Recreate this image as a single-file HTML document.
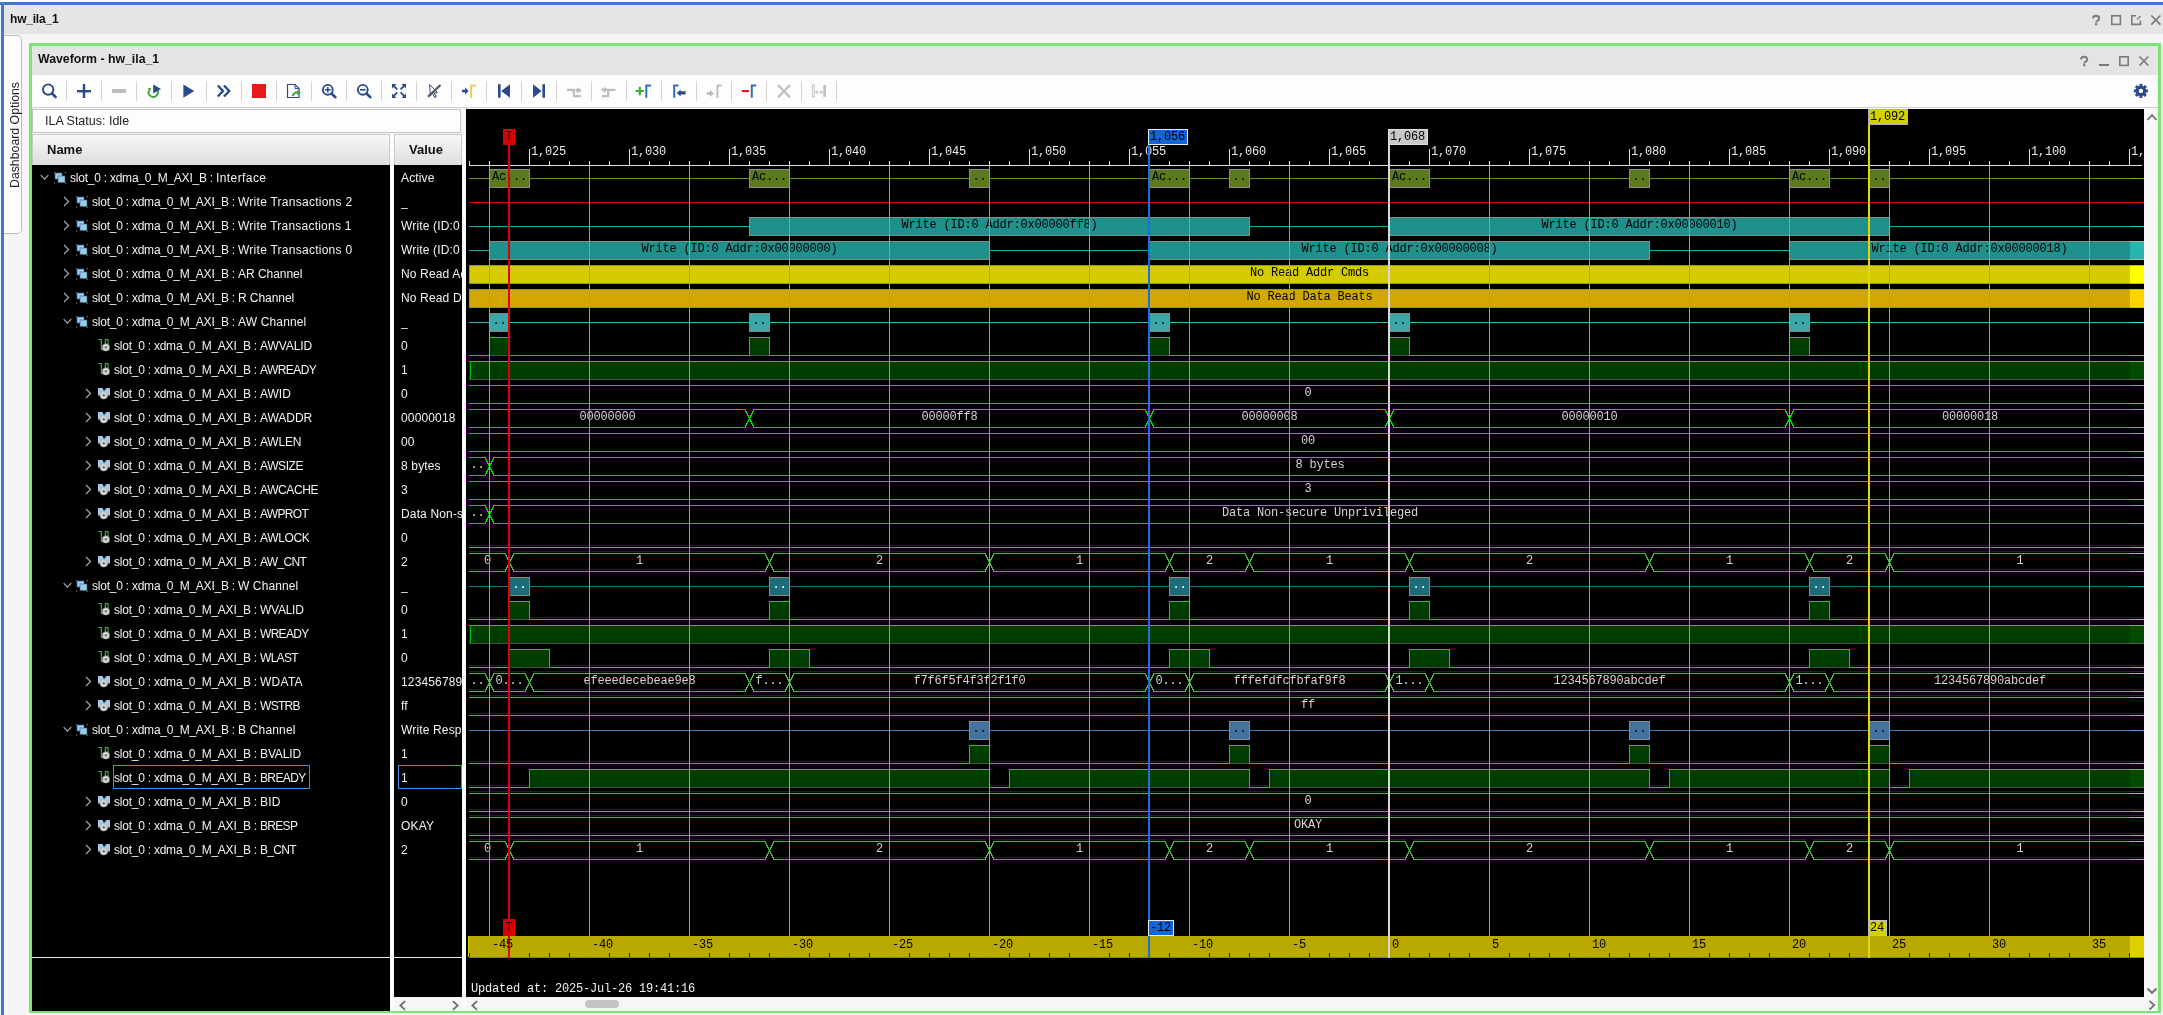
<!DOCTYPE html><html><head><meta charset="utf-8"><title>hw_ila_1</title><style>
*{box-sizing:border-box}
html,body{margin:0;padding:0}
body{width:2163px;height:1015px;overflow:hidden;position:relative;background:#f5f5f5;font-family:"Liberation Sans",sans-serif}
.a{position:absolute}
.t{position:absolute;white-space:nowrap;line-height:1}
.nm{position:absolute;white-space:nowrap;color:#f2f2f2;font-size:12px;line-height:24px;height:24px}
.vl{position:absolute;white-space:nowrap;color:#f2f2f2;font-size:12px;letter-spacing:0.15px;line-height:24px;height:24px;left:401px;overflow:hidden;width:61px}
</style></head><body>
<div class="a" style="left:0;top:0;width:2163px;height:2px;background:#ffffff"></div>
<div class="a" style="left:0;top:2px;width:2163px;height:3px;background:#4577c8"></div>
<div class="a" style="left:1px;top:2px;width:3px;height:1013px;background:#4577c8"></div>
<div class="a" style="left:4px;top:5px;width:2159px;height:29px;background:#e5e5e5"></div>
<div class="t" style="left:10px;top:13px;font-size:12px;font-weight:bold;color:#111;letter-spacing:-0.2px">hw_ila_1</div>
<div class="a" style="left:4px;top:35px;width:18px;height:199px;background:#fdfdfd;border:1px solid #bdbdbd;border-left:none;border-radius:0 5px 5px 0"></div>
<div class="t" style="left:8.5px;top:188px;transform-origin:0 0;transform:rotate(-90deg);font-size:12.3px;color:#222">Dashboard Options</div>
<div class="a" style="left:29px;top:43px;width:2132px;height:970px;border:3px solid #78e478;border-bottom-width:2px"></div>
<div class="a" style="left:32px;top:46px;width:2126px;height:29px;background:#e4e4e4"></div>
<div class="t" style="left:38px;top:53px;font-size:12.3px;font-weight:bold;color:#111">Waveform - hw_ila_1</div>
<div class="a" style="left:32px;top:75px;width:2126px;height:33px;background:#fdfdfd"></div>
<div class="a" style="left:32px;top:107px;width:2126px;height:1px;background:#d0d0d0"></div>
<svg class="a" style="left:32px;top:75px" width="2127" height="33" viewBox="32 75 2127 33">
<rect x="66" y="81" width="1" height="20" fill="#d4d4d4"/>
<rect x="101" y="81" width="1" height="20" fill="#d4d4d4"/>
<rect x="136" y="81" width="1" height="20" fill="#d4d4d4"/>
<rect x="171" y="81" width="1" height="20" fill="#d4d4d4"/>
<rect x="206" y="81" width="1" height="20" fill="#d4d4d4"/>
<rect x="241" y="81" width="1" height="20" fill="#d4d4d4"/>
<rect x="276" y="81" width="1" height="20" fill="#d4d4d4"/>
<rect x="311" y="81" width="1" height="20" fill="#d4d4d4"/>
<rect x="346" y="81" width="1" height="20" fill="#d4d4d4"/>
<rect x="381" y="81" width="1" height="20" fill="#d4d4d4"/>
<rect x="416" y="81" width="1" height="20" fill="#d4d4d4"/>
<rect x="451" y="81" width="1" height="20" fill="#d4d4d4"/>
<rect x="486" y="81" width="1" height="20" fill="#d4d4d4"/>
<rect x="521" y="81" width="1" height="20" fill="#d4d4d4"/>
<rect x="556" y="81" width="1" height="20" fill="#d4d4d4"/>
<rect x="591" y="81" width="1" height="20" fill="#d4d4d4"/>
<rect x="626" y="81" width="1" height="20" fill="#d4d4d4"/>
<rect x="661" y="81" width="1" height="20" fill="#d4d4d4"/>
<rect x="696" y="81" width="1" height="20" fill="#d4d4d4"/>
<rect x="731" y="81" width="1" height="20" fill="#d4d4d4"/>
<rect x="766" y="81" width="1" height="20" fill="#d4d4d4"/>
<rect x="801" y="81" width="1" height="20" fill="#d4d4d4"/>
<rect x="836" y="81" width="1" height="20" fill="#d4d4d4"/>
<circle cx="48.2" cy="89.6" r="5.2" fill="none" stroke="#2b4a8b" stroke-width="1.9"/>
<path d="M52.2,93.6 L55.6,97" stroke="#2b4a8b" stroke-width="2.6" stroke-linecap="round"/>
<rect x="77" y="90" width="14" height="2.4" fill="#2b4a8b"/><rect x="82.8" y="84" width="2.4" height="14" fill="#2b4a8b"/>
<rect x="112" y="89" width="14" height="4" fill="#bdbdbd"/>
<path d="M149,90.5 A4.6,4.6 0 1 0 156.5,89" fill="none" stroke="#3aa83a" stroke-width="2"/>
<path d="M147.5,88.5 L150.5,91.5 L151,87.8 Z" fill="#3aa83a"/>
<path d="M153.2,84.5 L161,89 L153.2,93.6 Z" fill="#2b4a8b"/>
<path d="M183.4,84.4 L194.2,91 L183.4,97.8 Z" fill="#2b4a8b"/>
<path d="M217.8,85.5 L223,91 L217.8,96.5 M224,85.5 L229.2,91 L224,96.5" fill="none" stroke="#2b4a8b" stroke-width="2.4"/>
<rect x="252" y="84" width="14" height="14" fill="#e81a1a"/>
<path d="M287.5,84.5 H295 L299,88.5 V97.5 H287.5 Z" fill="none" stroke="#2b4a8b" stroke-width="1.2"/>
<path d="M295,84.5 V88.5 H299" fill="none" stroke="#2b4a8b" stroke-width="1"/>
<path d="M292.5,96 Q294,92.5 298,92.3" fill="none" stroke="#3aa83a" stroke-width="2"/><path d="M297,90 L301,92.5 L297,95 Z" fill="#3aa83a"/>
<circle cx="327.8" cy="89.8" r="4.9" fill="none" stroke="#2b4a8b" stroke-width="1.9"/>
<path d="M332,94 L335.4,97.2" stroke="#2b4a8b" stroke-width="2.6" stroke-linecap="round"/>
<path d="M325,89.8 H330.6 M327.8,87 V92.6" stroke="#2b4a8b" stroke-width="1.5"/>
<circle cx="362.8" cy="89.8" r="4.9" fill="none" stroke="#2b4a8b" stroke-width="1.9"/>
<path d="M367,94 L370.4,97.2" stroke="#2b4a8b" stroke-width="2.6" stroke-linecap="round"/>
<path d="M360,89.8 H365.6" stroke="#2b4a8b" stroke-width="1.6"/>
<path d="M393,85.2 L397.2,89.4 M404.8,85.2 L400.6,89.4 M393,96.6 L397.2,92.4 M404.8,96.6 L400.6,92.4" stroke="#2b4a8b" stroke-width="1.8"/>
<path d="M392,84 H396.5 L392,88.5 Z M406,84 H401.5 L406,88.5 Z M392,98 H396.5 L392,93.5 Z M406,98 H401.5 L406,93.5 Z" fill="#2b4a8b"/>
<path d="M429.6,84.6 L437.4,92.6 L434.2,92.8 L436.2,97 L434.8,97.6 L432.8,93.4 L430.4,95.6 Z" fill="none" stroke="#2b4a8b" stroke-width="1"/>
<path d="M428,96.8 L440.5,85" stroke="#555" stroke-width="2.2"/>
<path d="M462,89.8 H465 V87.6 L468.6,91 L465,94.4 V92.2 H462 Z" fill="#2b4a8b"/>
<path d="M471.2,97.7 V85.4 H476" fill="none" stroke="#e8c860" stroke-width="2"/>
<rect x="498" y="84.2" width="2.6" height="13.5" fill="#2b4a8b"/><path d="M510,84.2 L501.2,91 L510,97.7 Z" fill="#2b4a8b"/>
<path d="M533,84.2 L541.6,91 L533,97.7 Z" fill="#2b4a8b"/><rect x="542.4" y="84.2" width="2.6" height="13.5" fill="#2b4a8b"/>
<path d="M567,89.8 H573.8 V96.2 H581" fill="none" stroke="#bdbdbd" stroke-width="2.2"/>
<path d="M575,90.3 L578.5,87 V88.8 H581 V91.8 H578.5 V93.6 Z" fill="#bdbdbd"/>
<path d="M602,96.2 H608.2 V89.8 H615.5" fill="none" stroke="#bdbdbd" stroke-width="2.2"/>
<path d="M607.8,89.6 L604.2,86.4 V88.2 H601.6 V91.2 H604.2 V93 Z" fill="#bdbdbd"/>
<path d="M635.6,91 H644 M639.8,86.8 V95.2" stroke="#3ab03a" stroke-width="2.2"/>
<path d="M646.3,97.7 V85.5 H651" fill="none" stroke="#2d72b8" stroke-width="2"/>
<path d="M674.2,97.7 V85.5 H678.5" fill="none" stroke="#2d72b8" stroke-width="2"/>
<path d="M676.8,92.9 L680.6,89.4 V91.2 H685.6 V94.6 H680.6 V96.4 Z" fill="#2b4a8b"/>
<path d="M706.8,92 H710 V89.8 L714,93.4 L710,97 V94.8 H706.8 Z" fill="#bdbdbd"/>
<path d="M717.4,97.7 V85.5 H721.5" fill="none" stroke="#bdbdbd" stroke-width="2"/>
<rect x="741.8" y="90" width="7.2" height="2.2" fill="#e02020"/>
<path d="M751.8,97.7 V85.5 H756.2" fill="none" stroke="#2d72b8" stroke-width="2"/>
<path d="M778,85 L790,97.4 M790,85 L778,97.4" stroke="#bdbdbd" stroke-width="2.2"/>
<rect x="812.3" y="85" width="2" height="11.8" fill="none" stroke="#bdbdbd" stroke-width="0.9"/>
<rect x="823.3" y="85" width="2.6" height="11.8" fill="#bdbdbd"/>
<path d="M815.5,92.2 H822.5 M817.5,90.4 L815.5,92.2 L817.5,94 M820.5,90.4 L822.5,92.2 L820.5,94" fill="none" stroke="#bdbdbd" stroke-width="1"/>
<rect x="2139.4" y="83.9" width="3" height="3.5" fill="#2b4a8b" transform="rotate(0 2140.9 90.9)"/><rect x="2139.4" y="83.9" width="3" height="3.5" fill="#2b4a8b" transform="rotate(45 2140.9 90.9)"/><rect x="2139.4" y="83.9" width="3" height="3.5" fill="#2b4a8b" transform="rotate(90 2140.9 90.9)"/><rect x="2139.4" y="83.9" width="3" height="3.5" fill="#2b4a8b" transform="rotate(135 2140.9 90.9)"/><rect x="2139.4" y="83.9" width="3" height="3.5" fill="#2b4a8b" transform="rotate(180 2140.9 90.9)"/><rect x="2139.4" y="83.9" width="3" height="3.5" fill="#2b4a8b" transform="rotate(225 2140.9 90.9)"/><rect x="2139.4" y="83.9" width="3" height="3.5" fill="#2b4a8b" transform="rotate(270 2140.9 90.9)"/><rect x="2139.4" y="83.9" width="3" height="3.5" fill="#2b4a8b" transform="rotate(315 2140.9 90.9)"/>
<circle cx="2140.9" cy="90.9" r="5.2" fill="#2b4a8b"/><circle cx="2140.9" cy="90.9" r="2.2" fill="#fdfdfd"/>
</svg>
<svg class="a" style="left:2060px;top:5px" width="103" height="70" viewBox="2060 5 103 70">
<path d="M2093,18.6 Q2093,15.8 2096.1,15.8 Q2099.2,15.8 2099.2,18.4 Q2099.2,20 2097.4,20.8 Q2096.1,21.4 2096.1,22.6" fill="none" stroke="#7b7b7b" stroke-width="1.9"/><rect x="2095" y="23.2" width="2.3" height="2" fill="#7b7b7b"/>
<rect x="2111.8" y="15.8" width="8.6" height="8.6" fill="none" stroke="#7b7b7b" stroke-width="1.6"/>
<path d="M2136,15.8 H2131.8 V24.4 H2140.4 V20.5" fill="none" stroke="#7b7b7b" stroke-width="1.6"/><path d="M2137,19.5 L2140.5,16" stroke="#7b7b7b" stroke-width="1.2"/>
<path d="M2151.3,15.5 L2160.4,24.6 M2160.4,15.5 L2151.3,24.6" stroke="#7b7b7b" stroke-width="1.7"/>
<path d="M2081,59.6 Q2081,56.8 2084.1,56.8 Q2087.2,56.8 2087.2,59.4 Q2087.2,61 2085.4,61.8 Q2084.1,62.4 2084.1,63.6" fill="none" stroke="#7b7b7b" stroke-width="1.9"/><rect x="2083" y="64.2" width="2.3" height="2" fill="#7b7b7b"/>
<rect x="2099" y="64" width="10" height="2" fill="#7b7b7b"/>
<rect x="2119.8" y="56.8" width="8.4" height="8.6" fill="none" stroke="#7b7b7b" stroke-width="1.6"/>
<path d="M2139.5,56.5 L2148.3,65.5 M2148.3,56.5 L2139.5,65.5" stroke="#7b7b7b" stroke-width="1.7"/>
</svg>
<div class="a" style="left:32px;top:108px;width:2126px;height:903px;background:#f8f8f8"></div>
<div class="a" style="left:32px;top:109px;width:429px;height:24px;background:#fdfdfd;border:1px solid #c4c4c4"></div>
<div class="t" style="left:45px;top:115px;font-size:12.5px;color:#222">ILA Status: Idle</div>
<div class="a" style="left:32px;top:134px;width:358px;height:31px;background:linear-gradient(#f7f7f7,#dddddd);border:1px solid #c8c8c8;border-bottom:none"></div>
<div class="t" style="left:47px;top:143px;font-size:13px;font-weight:bold;color:#111">Name</div>
<div class="a" style="left:394px;top:134px;width:68px;height:31px;background:linear-gradient(#f7f7f7,#dddddd);border:1px solid #c8c8c8;border-bottom:none"></div>
<div class="t" style="left:409px;top:143px;font-size:13px;font-weight:bold;color:#111">Value</div>
<div class="a" style="left:32px;top:165px;width:358px;height:846px;background:#000"></div>
<div class="a" style="left:32px;top:957px;width:358px;height:1px;background:#e8e8e8"></div>
<div class="a" style="left:394px;top:165px;width:68px;height:832px;background:#000"></div>
<div class="a" style="left:394px;top:957px;width:68px;height:1px;background:#e8e8e8"></div>
<div class="a" style="left:394px;top:997px;width:68px;height:14px;background:#f6f6f8"></div>
<div class="a" style="left:466px;top:109px;width:1678px;height:888px;background:#000"></div>
<div class="a" style="left:466px;top:997px;width:1692px;height:14px;background:#f6f6f8"></div>
<div class="a" style="left:2144px;top:109px;width:14px;height:888px;background:#f8f8fa"></div>
<svg class="a" style="left:394px;top:997px" width="1764" height="14" viewBox="394 997 1764 14"><path d="M405,1001.2 L400.4,1005.5 L405,1009.8 M453,1001.2 L457.6,1005.5 L453,1009.8 M477,1001.2 L472.4,1005.5 L477,1009.8 M2149.5,1000.8 L2154.2,1005.2 L2149.5,1009.6" fill="none" stroke="#6e6e6e" stroke-width="1.8"/><rect x="585" y="1000" width="34" height="8" rx="4" fill="#c4c4c4"/></svg>
<svg class="a" style="left:2144px;top:109px" width="14" height="888" viewBox="2144 109 14 888"><path d="M2147.5,120 L2152,115 L2156.5,120 M2147.5,988.5 L2152,993 L2156.5,988.5" fill="none" stroke="#6e6e6e" stroke-width="1.8"/></svg>
<svg class="a" style="left:40px;top:174px" width="10" height="7" viewBox="40 174 10 7"><path d="M40.7,175.2 L44.5,179.2 L48.3,175.2" fill="none" stroke="#a8a8a8" stroke-width="1.2"/></svg>
<svg class="a" style="left:53px;top:170px" width="14" height="14" viewBox="53 170 14 14"><rect x="55" y="173" width="7" height="6" fill="#9ccbe8" stroke="#3b6a96" stroke-width="0.6"/><rect x="58" y="176" width="7" height="6.5" fill="#9ccbe8" stroke="#3b6a96" stroke-width="0.6"/><rect x="54" y="172" width="1.2" height="1.2" fill="#777"/><rect x="64.8" y="172" width="1.2" height="1.2" fill="#777"/><rect x="54" y="182.5" width="1.2" height="1.2" fill="#777"/><rect x="64.8" y="182.5" width="1.2" height="1.2" fill="#777"/></svg>
<div class="nm" style="left:70px;top:166px"><span style="letter-spacing:-0.234px">slot_0 : xdma_0_M_AXI_B : </span><span style="letter-spacing:0.410px">Interface</span></div>
<div class="vl" style="top:166px">Active</div>
<svg class="a" style="left:63px;top:196px" width="8" height="11" viewBox="63 196 8 11"><path d="M64,197 L68.5,201.5 L64,206" fill="none" stroke="#a8a8a8" stroke-width="1.2"/></svg>
<svg class="a" style="left:75px;top:194px" width="14" height="14" viewBox="75 194 14 14"><rect x="77" y="197" width="7" height="6" fill="#9ccbe8" stroke="#3b6a96" stroke-width="0.6"/><rect x="80" y="200" width="7" height="6.5" fill="#9ccbe8" stroke="#3b6a96" stroke-width="0.6"/><rect x="76" y="196" width="1.2" height="1.2" fill="#777"/><rect x="86.8" y="196" width="1.2" height="1.2" fill="#777"/><rect x="76" y="206.5" width="1.2" height="1.2" fill="#777"/><rect x="86.8" y="206.5" width="1.2" height="1.2" fill="#777"/></svg>
<div class="nm" style="left:92px;top:190px"><span style="letter-spacing:-0.234px">slot_0 : xdma_0_M_AXI_B : </span><span style="letter-spacing:0.258px">Write Transactions 2</span></div>
<div class="vl" style="top:190px">_</div>
<svg class="a" style="left:63px;top:220px" width="8" height="11" viewBox="63 220 8 11"><path d="M64,221 L68.5,225.5 L64,230" fill="none" stroke="#a8a8a8" stroke-width="1.2"/></svg>
<svg class="a" style="left:75px;top:218px" width="14" height="14" viewBox="75 218 14 14"><rect x="77" y="221" width="7" height="6" fill="#9ccbe8" stroke="#3b6a96" stroke-width="0.6"/><rect x="80" y="224" width="7" height="6.5" fill="#9ccbe8" stroke="#3b6a96" stroke-width="0.6"/><rect x="76" y="220" width="1.2" height="1.2" fill="#777"/><rect x="86.8" y="220" width="1.2" height="1.2" fill="#777"/><rect x="76" y="230.5" width="1.2" height="1.2" fill="#777"/><rect x="86.8" y="230.5" width="1.2" height="1.2" fill="#777"/></svg>
<div class="nm" style="left:92px;top:214px"><span style="letter-spacing:-0.234px">slot_0 : xdma_0_M_AXI_B : </span><span style="letter-spacing:0.221px">Write Transactions 1</span></div>
<div class="vl" style="top:214px">Write (ID:0</div>
<svg class="a" style="left:63px;top:244px" width="8" height="11" viewBox="63 244 8 11"><path d="M64,245 L68.5,249.5 L64,254" fill="none" stroke="#a8a8a8" stroke-width="1.2"/></svg>
<svg class="a" style="left:75px;top:242px" width="14" height="14" viewBox="75 242 14 14"><rect x="77" y="245" width="7" height="6" fill="#9ccbe8" stroke="#3b6a96" stroke-width="0.6"/><rect x="80" y="248" width="7" height="6.5" fill="#9ccbe8" stroke="#3b6a96" stroke-width="0.6"/><rect x="76" y="244" width="1.2" height="1.2" fill="#777"/><rect x="86.8" y="244" width="1.2" height="1.2" fill="#777"/><rect x="76" y="254.5" width="1.2" height="1.2" fill="#777"/><rect x="86.8" y="254.5" width="1.2" height="1.2" fill="#777"/></svg>
<div class="nm" style="left:92px;top:238px"><span style="letter-spacing:-0.234px">slot_0 : xdma_0_M_AXI_B : </span><span style="letter-spacing:0.258px">Write Transactions 0</span></div>
<div class="vl" style="top:238px">Write (ID:0</div>
<svg class="a" style="left:63px;top:268px" width="8" height="11" viewBox="63 268 8 11"><path d="M64,269 L68.5,273.5 L64,278" fill="none" stroke="#a8a8a8" stroke-width="1.2"/></svg>
<svg class="a" style="left:75px;top:266px" width="14" height="14" viewBox="75 266 14 14"><rect x="77" y="269" width="7" height="6" fill="#9ccbe8" stroke="#3b6a96" stroke-width="0.6"/><rect x="80" y="272" width="7" height="6.5" fill="#9ccbe8" stroke="#3b6a96" stroke-width="0.6"/><rect x="76" y="268" width="1.2" height="1.2" fill="#777"/><rect x="86.8" y="268" width="1.2" height="1.2" fill="#777"/><rect x="76" y="278.5" width="1.2" height="1.2" fill="#777"/><rect x="86.8" y="278.5" width="1.2" height="1.2" fill="#777"/></svg>
<div class="nm" style="left:92px;top:262px"><span style="letter-spacing:-0.234px">slot_0 : xdma_0_M_AXI_B : </span><span style="letter-spacing:-0.038px">AR Channel</span></div>
<div class="vl" style="top:262px">No Read Ad</div>
<svg class="a" style="left:63px;top:292px" width="8" height="11" viewBox="63 292 8 11"><path d="M64,293 L68.5,297.5 L64,302" fill="none" stroke="#a8a8a8" stroke-width="1.2"/></svg>
<svg class="a" style="left:75px;top:290px" width="14" height="14" viewBox="75 290 14 14"><rect x="77" y="293" width="7" height="6" fill="#9ccbe8" stroke="#3b6a96" stroke-width="0.6"/><rect x="80" y="296" width="7" height="6.5" fill="#9ccbe8" stroke="#3b6a96" stroke-width="0.6"/><rect x="76" y="292" width="1.2" height="1.2" fill="#777"/><rect x="86.8" y="292" width="1.2" height="1.2" fill="#777"/><rect x="76" y="302.5" width="1.2" height="1.2" fill="#777"/><rect x="86.8" y="302.5" width="1.2" height="1.2" fill="#777"/></svg>
<div class="nm" style="left:92px;top:286px"><span style="letter-spacing:-0.234px">slot_0 : xdma_0_M_AXI_B : </span><span style="letter-spacing:-0.067px">R Channel</span></div>
<div class="vl" style="top:286px">No Read Da</div>
<svg class="a" style="left:63px;top:318px" width="10" height="7" viewBox="63 318 10 7"><path d="M63.7,319.2 L67.5,323.2 L71.3,319.2" fill="none" stroke="#a8a8a8" stroke-width="1.2"/></svg>
<svg class="a" style="left:75px;top:314px" width="14" height="14" viewBox="75 314 14 14"><rect x="77" y="317" width="7" height="6" fill="#9ccbe8" stroke="#3b6a96" stroke-width="0.6"/><rect x="80" y="320" width="7" height="6.5" fill="#9ccbe8" stroke="#3b6a96" stroke-width="0.6"/><rect x="76" y="316" width="1.2" height="1.2" fill="#777"/><rect x="86.8" y="316" width="1.2" height="1.2" fill="#777"/><rect x="76" y="326.5" width="1.2" height="1.2" fill="#777"/><rect x="86.8" y="326.5" width="1.2" height="1.2" fill="#777"/></svg>
<div class="nm" style="left:92px;top:310px"><span style="letter-spacing:-0.234px">slot_0 : xdma_0_M_AXI_B : </span><span style="letter-spacing:0.150px">AW Channel</span></div>
<div class="vl" style="top:310px">_</div>

<svg class="a" style="left:97px;top:338px" width="14" height="14" viewBox="97 338 14 14"><path d="M98.5,339.5 H101.3 V349.5 H109.5 M105.3,349 V339.5 H108 V349" fill="none" stroke="#3cc43c" stroke-width="1.1"/><circle cx="105.9" cy="347.4" r="3.6" fill="#d8d8d8" stroke="#9a9a9a" stroke-width="0.6"/><circle cx="105.9" cy="347.4" r="1.2" fill="#707070"/></svg>
<div class="nm" style="left:114px;top:334px"><span style="letter-spacing:-0.234px">slot_0 : xdma_0_M_AXI_B : </span><span style="letter-spacing:-0.085px">AWVALID</span></div>
<div class="vl" style="top:334px">0</div>

<svg class="a" style="left:97px;top:362px" width="14" height="14" viewBox="97 362 14 14"><path d="M98.5,363.5 H101.3 V373.5 H109.5 M105.3,373 V363.5 H108 V373" fill="none" stroke="#3cc43c" stroke-width="1.1"/><circle cx="105.9" cy="371.4" r="3.6" fill="#d8d8d8" stroke="#9a9a9a" stroke-width="0.6"/><circle cx="105.9" cy="371.4" r="1.2" fill="#707070"/></svg>
<div class="nm" style="left:114px;top:358px"><span style="letter-spacing:-0.234px">slot_0 : xdma_0_M_AXI_B : </span><span style="letter-spacing:-0.571px">AWREADY</span></div>
<div class="vl" style="top:358px">1</div>
<svg class="a" style="left:85px;top:388px" width="8" height="11" viewBox="85 388 8 11"><path d="M86,389 L90.5,393.5 L86,398" fill="none" stroke="#a8a8a8" stroke-width="1.2"/></svg>
<svg class="a" style="left:97px;top:386px" width="15" height="14" viewBox="97 386 15 14"><path d="M98,388 H102.5 L104,391 L106.5,388 H110 V395.5 H98 Z" fill="#9ccbe8"/><circle cx="103.8" cy="395.3" r="3.8" fill="#d8d8d8" stroke="#9a9a9a" stroke-width="0.6"/><circle cx="103.8" cy="395.3" r="1.3" fill="#707070"/></svg>
<div class="nm" style="left:114px;top:382px"><span style="letter-spacing:-0.234px">slot_0 : xdma_0_M_AXI_B : </span><span style="letter-spacing:-0.006px">AWID</span></div>
<div class="vl" style="top:382px">0</div>
<svg class="a" style="left:85px;top:412px" width="8" height="11" viewBox="85 412 8 11"><path d="M86,413 L90.5,417.5 L86,422" fill="none" stroke="#a8a8a8" stroke-width="1.2"/></svg>
<svg class="a" style="left:97px;top:410px" width="15" height="14" viewBox="97 410 15 14"><path d="M98,412 H102.5 L104,415 L106.5,412 H110 V419.5 H98 Z" fill="#9ccbe8"/><circle cx="103.8" cy="419.3" r="3.8" fill="#d8d8d8" stroke="#9a9a9a" stroke-width="0.6"/><circle cx="103.8" cy="419.3" r="1.3" fill="#707070"/></svg>
<div class="nm" style="left:114px;top:406px"><span style="letter-spacing:-0.234px">slot_0 : xdma_0_M_AXI_B : </span><span style="letter-spacing:-0.055px">AWADDR</span></div>
<div class="vl" style="top:406px">00000018</div>
<svg class="a" style="left:85px;top:436px" width="8" height="11" viewBox="85 436 8 11"><path d="M86,437 L90.5,441.5 L86,446" fill="none" stroke="#a8a8a8" stroke-width="1.2"/></svg>
<svg class="a" style="left:97px;top:434px" width="15" height="14" viewBox="97 434 15 14"><path d="M98,436 H102.5 L104,439 L106.5,436 H110 V443.5 H98 Z" fill="#9ccbe8"/><circle cx="103.8" cy="443.3" r="3.8" fill="#d8d8d8" stroke="#9a9a9a" stroke-width="0.6"/><circle cx="103.8" cy="443.3" r="1.3" fill="#707070"/></svg>
<div class="nm" style="left:114px;top:430px"><span style="letter-spacing:-0.234px">slot_0 : xdma_0_M_AXI_B : </span><span style="letter-spacing:-0.216px">AWLEN</span></div>
<div class="vl" style="top:430px">00</div>
<svg class="a" style="left:85px;top:460px" width="8" height="11" viewBox="85 460 8 11"><path d="M86,461 L90.5,465.5 L86,470" fill="none" stroke="#a8a8a8" stroke-width="1.2"/></svg>
<svg class="a" style="left:97px;top:458px" width="15" height="14" viewBox="97 458 15 14"><path d="M98,460 H102.5 L104,463 L106.5,460 H110 V467.5 H98 Z" fill="#9ccbe8"/><circle cx="103.8" cy="467.3" r="3.8" fill="#d8d8d8" stroke="#9a9a9a" stroke-width="0.6"/><circle cx="103.8" cy="467.3" r="1.3" fill="#707070"/></svg>
<div class="nm" style="left:114px;top:454px"><span style="letter-spacing:-0.234px">slot_0 : xdma_0_M_AXI_B : </span><span style="letter-spacing:-0.411px">AWSIZE</span></div>
<div class="vl" style="top:454px">8 bytes</div>
<svg class="a" style="left:85px;top:484px" width="8" height="11" viewBox="85 484 8 11"><path d="M86,485 L90.5,489.5 L86,494" fill="none" stroke="#a8a8a8" stroke-width="1.2"/></svg>
<svg class="a" style="left:97px;top:482px" width="15" height="14" viewBox="97 482 15 14"><path d="M98,484 H102.5 L104,487 L106.5,484 H110 V491.5 H98 Z" fill="#9ccbe8"/><circle cx="103.8" cy="491.3" r="3.8" fill="#d8d8d8" stroke="#9a9a9a" stroke-width="0.6"/><circle cx="103.8" cy="491.3" r="1.3" fill="#707070"/></svg>
<div class="nm" style="left:114px;top:478px"><span style="letter-spacing:-0.234px">slot_0 : xdma_0_M_AXI_B : </span><span style="letter-spacing:-0.414px">AWCACHE</span></div>
<div class="vl" style="top:478px">3</div>
<svg class="a" style="left:85px;top:508px" width="8" height="11" viewBox="85 508 8 11"><path d="M86,509 L90.5,513.5 L86,518" fill="none" stroke="#a8a8a8" stroke-width="1.2"/></svg>
<svg class="a" style="left:97px;top:506px" width="15" height="14" viewBox="97 506 15 14"><path d="M98,508 H102.5 L104,511 L106.5,508 H110 V515.5 H98 Z" fill="#9ccbe8"/><circle cx="103.8" cy="515.3" r="3.8" fill="#d8d8d8" stroke="#9a9a9a" stroke-width="0.6"/><circle cx="103.8" cy="515.3" r="1.3" fill="#707070"/></svg>
<div class="nm" style="left:114px;top:502px"><span style="letter-spacing:-0.234px">slot_0 : xdma_0_M_AXI_B : </span><span style="letter-spacing:-0.700px">AWPROT</span></div>
<div class="vl" style="top:502px">Data Non-s</div>

<svg class="a" style="left:97px;top:530px" width="14" height="14" viewBox="97 530 14 14"><path d="M98.5,531.5 H101.3 V541.5 H109.5 M105.3,541 V531.5 H108 V541" fill="none" stroke="#3cc43c" stroke-width="1.1"/><circle cx="105.9" cy="539.4" r="3.6" fill="#d8d8d8" stroke="#9a9a9a" stroke-width="0.6"/><circle cx="105.9" cy="539.4" r="1.2" fill="#707070"/></svg>
<div class="nm" style="left:114px;top:526px"><span style="letter-spacing:-0.234px">slot_0 : xdma_0_M_AXI_B : </span><span style="letter-spacing:-0.372px">AWLOCK</span></div>
<div class="vl" style="top:526px">0</div>
<svg class="a" style="left:85px;top:556px" width="8" height="11" viewBox="85 556 8 11"><path d="M86,557 L90.5,561.5 L86,566" fill="none" stroke="#a8a8a8" stroke-width="1.2"/></svg>
<svg class="a" style="left:97px;top:554px" width="15" height="14" viewBox="97 554 15 14"><path d="M98,556 H102.5 L104,559 L106.5,556 H110 V563.5 H98 Z" fill="#9ccbe8"/><circle cx="103.8" cy="563.3" r="3.8" fill="#d8d8d8" stroke="#9a9a9a" stroke-width="0.6"/><circle cx="103.8" cy="563.3" r="1.3" fill="#707070"/></svg>
<div class="nm" style="left:114px;top:550px"><span style="letter-spacing:-0.234px">slot_0 : xdma_0_M_AXI_B : </span><span style="letter-spacing:-0.700px">AW_CNT</span></div>
<div class="vl" style="top:550px">2</div>
<svg class="a" style="left:63px;top:582px" width="10" height="7" viewBox="63 582 10 7"><path d="M63.7,583.2 L67.5,587.2 L71.3,583.2" fill="none" stroke="#a8a8a8" stroke-width="1.2"/></svg>
<svg class="a" style="left:75px;top:578px" width="14" height="14" viewBox="75 578 14 14"><rect x="77" y="581" width="7" height="6" fill="#9ccbe8" stroke="#3b6a96" stroke-width="0.6"/><rect x="80" y="584" width="7" height="6.5" fill="#9ccbe8" stroke="#3b6a96" stroke-width="0.6"/><rect x="76" y="580" width="1.2" height="1.2" fill="#777"/><rect x="86.8" y="580" width="1.2" height="1.2" fill="#777"/><rect x="76" y="590.5" width="1.2" height="1.2" fill="#777"/><rect x="86.8" y="590.5" width="1.2" height="1.2" fill="#777"/></svg>
<div class="nm" style="left:92px;top:574px"><span style="letter-spacing:-0.234px">slot_0 : xdma_0_M_AXI_B : </span><span style="letter-spacing:0.101px">W Channel</span></div>
<div class="vl" style="top:574px">_</div>

<svg class="a" style="left:97px;top:602px" width="14" height="14" viewBox="97 602 14 14"><path d="M98.5,603.5 H101.3 V613.5 H109.5 M105.3,613 V603.5 H108 V613" fill="none" stroke="#3cc43c" stroke-width="1.1"/><circle cx="105.9" cy="611.4" r="3.6" fill="#d8d8d8" stroke="#9a9a9a" stroke-width="0.6"/><circle cx="105.9" cy="611.4" r="1.2" fill="#707070"/></svg>
<div class="nm" style="left:114px;top:598px"><span style="letter-spacing:-0.234px">slot_0 : xdma_0_M_AXI_B : </span><span style="letter-spacing:-0.250px">WVALID</span></div>
<div class="vl" style="top:598px">0</div>

<svg class="a" style="left:97px;top:626px" width="14" height="14" viewBox="97 626 14 14"><path d="M98.5,627.5 H101.3 V637.5 H109.5 M105.3,637 V627.5 H108 V637" fill="none" stroke="#3cc43c" stroke-width="1.1"/><circle cx="105.9" cy="635.4" r="3.6" fill="#d8d8d8" stroke="#9a9a9a" stroke-width="0.6"/><circle cx="105.9" cy="635.4" r="1.2" fill="#707070"/></svg>
<div class="nm" style="left:114px;top:622px"><span style="letter-spacing:-0.234px">slot_0 : xdma_0_M_AXI_B : </span><span style="letter-spacing:-0.700px">WREADY</span></div>
<div class="vl" style="top:622px">1</div>

<svg class="a" style="left:97px;top:650px" width="14" height="14" viewBox="97 650 14 14"><path d="M98.5,651.5 H101.3 V661.5 H109.5 M105.3,661 V651.5 H108 V661" fill="none" stroke="#3cc43c" stroke-width="1.1"/><circle cx="105.9" cy="659.4" r="3.6" fill="#d8d8d8" stroke="#9a9a9a" stroke-width="0.6"/><circle cx="105.9" cy="659.4" r="1.2" fill="#707070"/></svg>
<div class="nm" style="left:114px;top:646px"><span style="letter-spacing:-0.234px">slot_0 : xdma_0_M_AXI_B : </span><span style="letter-spacing:-0.700px">WLAST</span></div>
<div class="vl" style="top:646px">0</div>
<svg class="a" style="left:85px;top:676px" width="8" height="11" viewBox="85 676 8 11"><path d="M86,677 L90.5,681.5 L86,686" fill="none" stroke="#a8a8a8" stroke-width="1.2"/></svg>
<svg class="a" style="left:97px;top:674px" width="15" height="14" viewBox="97 674 15 14"><path d="M98,676 H102.5 L104,679 L106.5,676 H110 V683.5 H98 Z" fill="#9ccbe8"/><circle cx="103.8" cy="683.3" r="3.8" fill="#d8d8d8" stroke="#9a9a9a" stroke-width="0.6"/><circle cx="103.8" cy="683.3" r="1.3" fill="#707070"/></svg>
<div class="nm" style="left:114px;top:670px"><span style="letter-spacing:-0.234px">slot_0 : xdma_0_M_AXI_B : </span><span style="letter-spacing:0.264px">WDATA</span></div>
<div class="vl" style="top:670px">1234567890abcdef</div>
<svg class="a" style="left:85px;top:700px" width="8" height="11" viewBox="85 700 8 11"><path d="M86,701 L90.5,705.5 L86,710" fill="none" stroke="#a8a8a8" stroke-width="1.2"/></svg>
<svg class="a" style="left:97px;top:698px" width="15" height="14" viewBox="97 698 15 14"><path d="M98,700 H102.5 L104,703 L106.5,700 H110 V707.5 H98 Z" fill="#9ccbe8"/><circle cx="103.8" cy="707.3" r="3.8" fill="#d8d8d8" stroke="#9a9a9a" stroke-width="0.6"/><circle cx="103.8" cy="707.3" r="1.3" fill="#707070"/></svg>
<div class="nm" style="left:114px;top:694px"><span style="letter-spacing:-0.234px">slot_0 : xdma_0_M_AXI_B : </span><span style="letter-spacing:-0.700px">WSTRB</span></div>
<div class="vl" style="top:694px">ff</div>
<svg class="a" style="left:63px;top:726px" width="10" height="7" viewBox="63 726 10 7"><path d="M63.7,727.2 L67.5,731.2 L71.3,727.2" fill="none" stroke="#a8a8a8" stroke-width="1.2"/></svg>
<svg class="a" style="left:75px;top:722px" width="14" height="14" viewBox="75 722 14 14"><rect x="77" y="725" width="7" height="6" fill="#9ccbe8" stroke="#3b6a96" stroke-width="0.6"/><rect x="80" y="728" width="7" height="6.5" fill="#9ccbe8" stroke="#3b6a96" stroke-width="0.6"/><rect x="76" y="724" width="1.2" height="1.2" fill="#777"/><rect x="86.8" y="724" width="1.2" height="1.2" fill="#777"/><rect x="76" y="734.5" width="1.2" height="1.2" fill="#777"/><rect x="86.8" y="734.5" width="1.2" height="1.2" fill="#777"/></svg>
<div class="nm" style="left:92px;top:718px"><span style="letter-spacing:-0.234px">slot_0 : xdma_0_M_AXI_B : </span><span style="letter-spacing:0.178px">B Channel</span></div>
<div class="vl" style="top:718px">Write Resp</div>

<svg class="a" style="left:97px;top:746px" width="14" height="14" viewBox="97 746 14 14"><path d="M98.5,747.5 H101.3 V757.5 H109.5 M105.3,757 V747.5 H108 V757" fill="none" stroke="#3cc43c" stroke-width="1.1"/><circle cx="105.9" cy="755.4" r="3.6" fill="#d8d8d8" stroke="#9a9a9a" stroke-width="0.6"/><circle cx="105.9" cy="755.4" r="1.2" fill="#707070"/></svg>
<div class="nm" style="left:114px;top:742px"><span style="letter-spacing:-0.234px">slot_0 : xdma_0_M_AXI_B : </span><span style="letter-spacing:-0.126px">BVALID</span></div>
<div class="vl" style="top:742px">1</div>

<svg class="a" style="left:97px;top:770px" width="14" height="14" viewBox="97 770 14 14"><path d="M98.5,771.5 H101.3 V781.5 H109.5 M105.3,781 V771.5 H108 V781" fill="none" stroke="#3cc43c" stroke-width="1.1"/><circle cx="105.9" cy="779.4" r="3.6" fill="#d8d8d8" stroke="#9a9a9a" stroke-width="0.6"/><circle cx="105.9" cy="779.4" r="1.2" fill="#707070"/></svg>
<div class="nm" style="left:114px;top:766px"><span style="letter-spacing:-0.234px">slot_0 : xdma_0_M_AXI_B : </span><span style="letter-spacing:-0.629px">BREADY</span></div>
<div class="vl" style="top:766px">1</div>
<svg class="a" style="left:85px;top:796px" width="8" height="11" viewBox="85 796 8 11"><path d="M86,797 L90.5,801.5 L86,806" fill="none" stroke="#a8a8a8" stroke-width="1.2"/></svg>
<svg class="a" style="left:97px;top:794px" width="15" height="14" viewBox="97 794 15 14"><path d="M98,796 H102.5 L104,799 L106.5,796 H110 V803.5 H98 Z" fill="#9ccbe8"/><circle cx="103.8" cy="803.3" r="3.8" fill="#d8d8d8" stroke="#9a9a9a" stroke-width="0.6"/><circle cx="103.8" cy="803.3" r="1.3" fill="#707070"/></svg>
<div class="nm" style="left:114px;top:790px"><span style="letter-spacing:-0.234px">slot_0 : xdma_0_M_AXI_B : </span><span style="letter-spacing:0.181px">BID</span></div>
<div class="vl" style="top:790px">0</div>
<svg class="a" style="left:85px;top:820px" width="8" height="11" viewBox="85 820 8 11"><path d="M86,821 L90.5,825.5 L86,830" fill="none" stroke="#a8a8a8" stroke-width="1.2"/></svg>
<svg class="a" style="left:97px;top:818px" width="15" height="14" viewBox="97 818 15 14"><path d="M98,820 H102.5 L104,823 L106.5,820 H110 V827.5 H98 Z" fill="#9ccbe8"/><circle cx="103.8" cy="827.3" r="3.8" fill="#d8d8d8" stroke="#9a9a9a" stroke-width="0.6"/><circle cx="103.8" cy="827.3" r="1.3" fill="#707070"/></svg>
<div class="nm" style="left:114px;top:814px"><span style="letter-spacing:-0.234px">slot_0 : xdma_0_M_AXI_B : </span><span style="letter-spacing:-0.700px">BRESP</span></div>
<div class="vl" style="top:814px">OKAY</div>
<svg class="a" style="left:85px;top:844px" width="8" height="11" viewBox="85 844 8 11"><path d="M86,845 L90.5,849.5 L86,854" fill="none" stroke="#a8a8a8" stroke-width="1.2"/></svg>
<svg class="a" style="left:97px;top:842px" width="15" height="14" viewBox="97 842 15 14"><path d="M98,844 H102.5 L104,847 L106.5,844 H110 V851.5 H98 Z" fill="#9ccbe8"/><circle cx="103.8" cy="851.3" r="3.8" fill="#d8d8d8" stroke="#9a9a9a" stroke-width="0.6"/><circle cx="103.8" cy="851.3" r="1.3" fill="#707070"/></svg>
<div class="nm" style="left:114px;top:838px"><span style="letter-spacing:-0.234px">slot_0 : xdma_0_M_AXI_B : </span><span style="letter-spacing:-0.700px">B_CNT</span></div>
<div class="vl" style="top:838px">2</div>
<div class="a" style="left:113px;top:765px;width:197px;height:24px;border:1px solid #3d8ee0"></div>
<div class="a" style="left:398px;top:765px;width:64px;height:24px;border-right:none;border:1px solid #3d8ee0"></div>
<div class="a" style="left:462px;top:133px;width:4px;height:878px;background:#fbfbfb"></div>
<div class="a" style="left:390px;top:134px;width:4px;height:877px;background:#fbfbfb"></div>
<svg class="a" style="left:466px;top:109px" width="1678" height="888" viewBox="466 109 1678 888" font-family="Liberation Mono, monospace" font-size="12px" letter-spacing="-0.2px">
<defs><clipPath id="cl"><rect x="466" y="109" width="1678" height="888"/></clipPath></defs>
<g shape-rendering="crispEdges">
<rect x="469" y="165" width="1673" height="1" fill="#e0e0e0"/>
<rect x="469" y="161" width="1" height="4" fill="#e0e0e0"/>
<rect x="489" y="161" width="1" height="4" fill="#e0e0e0"/>
<rect x="509" y="161" width="1" height="4" fill="#e0e0e0"/>
<rect x="529" y="149" width="1" height="16" fill="#e0e0e0"/>
<rect x="549" y="161" width="1" height="4" fill="#e0e0e0"/>
<rect x="569" y="161" width="1" height="4" fill="#e0e0e0"/>
<rect x="589" y="161" width="1" height="4" fill="#e0e0e0"/>
<rect x="609" y="161" width="1" height="4" fill="#e0e0e0"/>
<rect x="629" y="149" width="1" height="16" fill="#e0e0e0"/>
<rect x="649" y="161" width="1" height="4" fill="#e0e0e0"/>
<rect x="669" y="161" width="1" height="4" fill="#e0e0e0"/>
<rect x="689" y="161" width="1" height="4" fill="#e0e0e0"/>
<rect x="709" y="161" width="1" height="4" fill="#e0e0e0"/>
<rect x="729" y="149" width="1" height="16" fill="#e0e0e0"/>
<rect x="749" y="161" width="1" height="4" fill="#e0e0e0"/>
<rect x="769" y="161" width="1" height="4" fill="#e0e0e0"/>
<rect x="789" y="161" width="1" height="4" fill="#e0e0e0"/>
<rect x="809" y="161" width="1" height="4" fill="#e0e0e0"/>
<rect x="829" y="149" width="1" height="16" fill="#e0e0e0"/>
<rect x="849" y="161" width="1" height="4" fill="#e0e0e0"/>
<rect x="869" y="161" width="1" height="4" fill="#e0e0e0"/>
<rect x="889" y="161" width="1" height="4" fill="#e0e0e0"/>
<rect x="909" y="161" width="1" height="4" fill="#e0e0e0"/>
<rect x="929" y="149" width="1" height="16" fill="#e0e0e0"/>
<rect x="949" y="161" width="1" height="4" fill="#e0e0e0"/>
<rect x="969" y="161" width="1" height="4" fill="#e0e0e0"/>
<rect x="989" y="161" width="1" height="4" fill="#e0e0e0"/>
<rect x="1009" y="161" width="1" height="4" fill="#e0e0e0"/>
<rect x="1029" y="149" width="1" height="16" fill="#e0e0e0"/>
<rect x="1049" y="161" width="1" height="4" fill="#e0e0e0"/>
<rect x="1069" y="161" width="1" height="4" fill="#e0e0e0"/>
<rect x="1089" y="161" width="1" height="4" fill="#e0e0e0"/>
<rect x="1109" y="161" width="1" height="4" fill="#e0e0e0"/>
<rect x="1129" y="149" width="1" height="16" fill="#e0e0e0"/>
<rect x="1149" y="161" width="1" height="4" fill="#e0e0e0"/>
<rect x="1169" y="161" width="1" height="4" fill="#e0e0e0"/>
<rect x="1189" y="161" width="1" height="4" fill="#e0e0e0"/>
<rect x="1209" y="161" width="1" height="4" fill="#e0e0e0"/>
<rect x="1229" y="149" width="1" height="16" fill="#e0e0e0"/>
<rect x="1249" y="161" width="1" height="4" fill="#e0e0e0"/>
<rect x="1269" y="161" width="1" height="4" fill="#e0e0e0"/>
<rect x="1289" y="161" width="1" height="4" fill="#e0e0e0"/>
<rect x="1309" y="161" width="1" height="4" fill="#e0e0e0"/>
<rect x="1329" y="149" width="1" height="16" fill="#e0e0e0"/>
<rect x="1349" y="161" width="1" height="4" fill="#e0e0e0"/>
<rect x="1369" y="161" width="1" height="4" fill="#e0e0e0"/>
<rect x="1389" y="161" width="1" height="4" fill="#e0e0e0"/>
<rect x="1409" y="161" width="1" height="4" fill="#e0e0e0"/>
<rect x="1429" y="149" width="1" height="16" fill="#e0e0e0"/>
<rect x="1449" y="161" width="1" height="4" fill="#e0e0e0"/>
<rect x="1469" y="161" width="1" height="4" fill="#e0e0e0"/>
<rect x="1489" y="161" width="1" height="4" fill="#e0e0e0"/>
<rect x="1509" y="161" width="1" height="4" fill="#e0e0e0"/>
<rect x="1529" y="149" width="1" height="16" fill="#e0e0e0"/>
<rect x="1549" y="161" width="1" height="4" fill="#e0e0e0"/>
<rect x="1569" y="161" width="1" height="4" fill="#e0e0e0"/>
<rect x="1589" y="161" width="1" height="4" fill="#e0e0e0"/>
<rect x="1609" y="161" width="1" height="4" fill="#e0e0e0"/>
<rect x="1629" y="149" width="1" height="16" fill="#e0e0e0"/>
<rect x="1649" y="161" width="1" height="4" fill="#e0e0e0"/>
<rect x="1669" y="161" width="1" height="4" fill="#e0e0e0"/>
<rect x="1689" y="161" width="1" height="4" fill="#e0e0e0"/>
<rect x="1709" y="161" width="1" height="4" fill="#e0e0e0"/>
<rect x="1729" y="149" width="1" height="16" fill="#e0e0e0"/>
<rect x="1749" y="161" width="1" height="4" fill="#e0e0e0"/>
<rect x="1769" y="161" width="1" height="4" fill="#e0e0e0"/>
<rect x="1789" y="161" width="1" height="4" fill="#e0e0e0"/>
<rect x="1809" y="161" width="1" height="4" fill="#e0e0e0"/>
<rect x="1829" y="149" width="1" height="16" fill="#e0e0e0"/>
<rect x="1849" y="161" width="1" height="4" fill="#e0e0e0"/>
<rect x="1869" y="161" width="1" height="4" fill="#e0e0e0"/>
<rect x="1889" y="161" width="1" height="4" fill="#e0e0e0"/>
<rect x="1909" y="161" width="1" height="4" fill="#e0e0e0"/>
<rect x="1929" y="149" width="1" height="16" fill="#e0e0e0"/>
<rect x="1949" y="161" width="1" height="4" fill="#e0e0e0"/>
<rect x="1969" y="161" width="1" height="4" fill="#e0e0e0"/>
<rect x="1989" y="161" width="1" height="4" fill="#e0e0e0"/>
<rect x="2009" y="161" width="1" height="4" fill="#e0e0e0"/>
<rect x="2029" y="149" width="1" height="16" fill="#e0e0e0"/>
<rect x="2049" y="161" width="1" height="4" fill="#e0e0e0"/>
<rect x="2069" y="161" width="1" height="4" fill="#e0e0e0"/>
<rect x="2089" y="161" width="1" height="4" fill="#e0e0e0"/>
<rect x="2109" y="161" width="1" height="4" fill="#e0e0e0"/>
<rect x="2129" y="149" width="1" height="16" fill="#e0e0e0"/>
</g>
<text x="531" y="155" fill="#e8e8e8">1,025</text>
<text x="631" y="155" fill="#e8e8e8">1,030</text>
<text x="731" y="155" fill="#e8e8e8">1,035</text>
<text x="831" y="155" fill="#e8e8e8">1,040</text>
<text x="931" y="155" fill="#e8e8e8">1,045</text>
<text x="1031" y="155" fill="#e8e8e8">1,050</text>
<text x="1131" y="155" fill="#e8e8e8">1,055</text>
<text x="1231" y="155" fill="#e8e8e8">1,060</text>
<text x="1331" y="155" fill="#e8e8e8">1,065</text>
<text x="1431" y="155" fill="#e8e8e8">1,070</text>
<text x="1531" y="155" fill="#e8e8e8">1,075</text>
<text x="1631" y="155" fill="#e8e8e8">1,080</text>
<text x="1731" y="155" fill="#e8e8e8">1,085</text>
<text x="1831" y="155" fill="#e8e8e8">1,090</text>
<text x="1931" y="155" fill="#e8e8e8">1,095</text>
<text x="2031" y="155" fill="#e8e8e8">1,100</text>
<text x="2131" y="155" fill="#e8e8e8">1,105</text>
<g shape-rendering="crispEdges">
<rect x="469" y="178" width="1681" height="1" fill="#6a8c22"/>
<rect x="489" y="169" width="41" height="19" fill="#5b7a1e"/>
<rect x="489" y="169" width="41" height="1" fill="#8a8a8a"/>
<rect x="489" y="187" width="41" height="1" fill="#8a8a8a"/>
<rect x="489" y="169" width="1" height="19" fill="#8a8a8a"/>
<rect x="529" y="169" width="1" height="19" fill="#8a8a8a"/>
<text x="509.5" y="180" fill="#000" text-anchor="middle">Ac...</text>
<rect x="749" y="169" width="41" height="19" fill="#5b7a1e"/>
<rect x="749" y="169" width="41" height="1" fill="#8a8a8a"/>
<rect x="749" y="187" width="41" height="1" fill="#8a8a8a"/>
<rect x="749" y="169" width="1" height="19" fill="#8a8a8a"/>
<rect x="789" y="169" width="1" height="19" fill="#8a8a8a"/>
<text x="769.5" y="180" fill="#000" text-anchor="middle">Ac...</text>
<rect x="969" y="169" width="21" height="19" fill="#5b7a1e"/>
<rect x="969" y="169" width="21" height="1" fill="#8a8a8a"/>
<rect x="969" y="187" width="21" height="1" fill="#8a8a8a"/>
<rect x="969" y="169" width="1" height="19" fill="#8a8a8a"/>
<rect x="989" y="169" width="1" height="19" fill="#8a8a8a"/>
<text x="979.5" y="180" fill="#000" text-anchor="middle">..</text>
<rect x="1149" y="169" width="41" height="19" fill="#5b7a1e"/>
<rect x="1149" y="169" width="41" height="1" fill="#8a8a8a"/>
<rect x="1149" y="187" width="41" height="1" fill="#8a8a8a"/>
<rect x="1149" y="169" width="1" height="19" fill="#8a8a8a"/>
<rect x="1189" y="169" width="1" height="19" fill="#8a8a8a"/>
<text x="1169.5" y="180" fill="#000" text-anchor="middle">Ac...</text>
<rect x="1229" y="169" width="21" height="19" fill="#5b7a1e"/>
<rect x="1229" y="169" width="21" height="1" fill="#8a8a8a"/>
<rect x="1229" y="187" width="21" height="1" fill="#8a8a8a"/>
<rect x="1229" y="169" width="1" height="19" fill="#8a8a8a"/>
<rect x="1249" y="169" width="1" height="19" fill="#8a8a8a"/>
<text x="1239.5" y="180" fill="#000" text-anchor="middle">..</text>
<rect x="1389" y="169" width="41" height="19" fill="#5b7a1e"/>
<rect x="1389" y="169" width="41" height="1" fill="#8a8a8a"/>
<rect x="1389" y="187" width="41" height="1" fill="#8a8a8a"/>
<rect x="1389" y="169" width="1" height="19" fill="#8a8a8a"/>
<rect x="1429" y="169" width="1" height="19" fill="#8a8a8a"/>
<text x="1409.5" y="180" fill="#000" text-anchor="middle">Ac...</text>
<rect x="1629" y="169" width="21" height="19" fill="#5b7a1e"/>
<rect x="1629" y="169" width="21" height="1" fill="#8a8a8a"/>
<rect x="1629" y="187" width="21" height="1" fill="#8a8a8a"/>
<rect x="1629" y="169" width="1" height="19" fill="#8a8a8a"/>
<rect x="1649" y="169" width="1" height="19" fill="#8a8a8a"/>
<text x="1639.5" y="180" fill="#000" text-anchor="middle">..</text>
<rect x="1789" y="169" width="41" height="19" fill="#5b7a1e"/>
<rect x="1789" y="169" width="41" height="1" fill="#8a8a8a"/>
<rect x="1789" y="187" width="41" height="1" fill="#8a8a8a"/>
<rect x="1789" y="169" width="1" height="19" fill="#8a8a8a"/>
<rect x="1829" y="169" width="1" height="19" fill="#8a8a8a"/>
<text x="1809.5" y="180" fill="#000" text-anchor="middle">Ac...</text>
<rect x="1869" y="169" width="21" height="19" fill="#5b7a1e"/>
<rect x="1869" y="169" width="21" height="1" fill="#8a8a8a"/>
<rect x="1869" y="187" width="21" height="1" fill="#8a8a8a"/>
<rect x="1869" y="169" width="1" height="19" fill="#8a8a8a"/>
<rect x="1889" y="169" width="1" height="19" fill="#8a8a8a"/>
<text x="1879.5" y="180" fill="#000" text-anchor="middle">..</text>
<rect x="469" y="202" width="1681" height="1" fill="#e00000"/>
<rect x="469" y="226" width="1681" height="1" fill="#20a0a0"/>
<rect x="749" y="217" width="501" height="19" fill="#1e918c"/>
<rect x="749" y="217" width="501" height="1" fill="#8a8a8a"/>
<rect x="749" y="235" width="501" height="1" fill="#8a8a8a"/>
<rect x="749" y="217" width="1" height="19" fill="#8a8a8a"/>
<rect x="1249" y="217" width="1" height="19" fill="#8a8a8a"/>
<text x="999.5" y="228" fill="#000" text-anchor="middle">Write (ID:0 Addr:0x00000ff8)</text>
<rect x="1389" y="217" width="501" height="19" fill="#1e918c"/>
<rect x="1389" y="217" width="501" height="1" fill="#8a8a8a"/>
<rect x="1389" y="235" width="501" height="1" fill="#8a8a8a"/>
<rect x="1389" y="217" width="1" height="19" fill="#8a8a8a"/>
<rect x="1889" y="217" width="1" height="19" fill="#8a8a8a"/>
<text x="1639.5" y="228" fill="#000" text-anchor="middle">Write (ID:0 Addr:0x00000010)</text>
<rect x="469" y="250" width="1681" height="1" fill="#20a0a0"/>
<rect x="489" y="241" width="501" height="19" fill="#1e918c"/>
<rect x="489" y="241" width="501" height="1" fill="#8a8a8a"/>
<rect x="489" y="259" width="501" height="1" fill="#8a8a8a"/>
<rect x="489" y="241" width="1" height="19" fill="#8a8a8a"/>
<rect x="989" y="241" width="1" height="19" fill="#8a8a8a"/>
<text x="739.5" y="252" fill="#000" text-anchor="middle">Write (ID:0 Addr:0x00000000)</text>
<rect x="1149" y="241" width="501" height="19" fill="#1e918c"/>
<rect x="1149" y="241" width="501" height="1" fill="#8a8a8a"/>
<rect x="1149" y="259" width="501" height="1" fill="#8a8a8a"/>
<rect x="1149" y="241" width="1" height="19" fill="#8a8a8a"/>
<rect x="1649" y="241" width="1" height="19" fill="#8a8a8a"/>
<text x="1399.5" y="252" fill="#000" text-anchor="middle">Write (ID:0 Addr:0x00000008)</text>
<rect x="1789" y="241" width="361" height="19" fill="#1e918c"/>
<rect x="1789" y="241" width="361" height="1" fill="#8a8a8a"/>
<rect x="1789" y="259" width="361" height="1" fill="#8a8a8a"/>
<rect x="1789" y="241" width="1" height="19" fill="#8a8a8a"/>
<rect x="2149" y="241" width="1" height="19" fill="#8a8a8a"/>
<text x="1969.5" y="252" fill="#000" text-anchor="middle">Write (ID:0 Addr:0x00000018)</text>
<rect x="469" y="274" width="1681" height="1" fill="#d4cc00"/>
<rect x="469" y="265" width="1681" height="19" fill="#d4cc00"/>
<rect x="469" y="265" width="1681" height="1" fill="#8a8a8a"/>
<rect x="469" y="283" width="1681" height="1" fill="#8a8a8a"/>
<rect x="469" y="265" width="1" height="19" fill="#8a8a8a"/>
<rect x="2149" y="265" width="1" height="19" fill="#8a8a8a"/>
<text x="1309.5" y="276" fill="#000" text-anchor="middle">No Read Addr Cmds</text>
<rect x="469" y="298" width="1681" height="1" fill="#d2a800"/>
<rect x="469" y="289" width="1681" height="19" fill="#d2a800"/>
<rect x="469" y="289" width="1681" height="1" fill="#8a8a8a"/>
<rect x="469" y="307" width="1681" height="1" fill="#8a8a8a"/>
<rect x="469" y="289" width="1" height="19" fill="#8a8a8a"/>
<rect x="2149" y="289" width="1" height="19" fill="#8a8a8a"/>
<text x="1309.5" y="300" fill="#000" text-anchor="middle">No Read Data Beats</text>
<rect x="469" y="322" width="1681" height="1" fill="#3ab4b4"/>
<rect x="489" y="313" width="21" height="19" fill="#3aa8a8"/>
<rect x="489" y="313" width="21" height="1" fill="#8a8288"/>
<rect x="489" y="331" width="21" height="1" fill="#8a8288"/>
<rect x="489" y="313" width="1" height="19" fill="#8a8288"/>
<rect x="509" y="313" width="1" height="19" fill="#8a8288"/>
<text x="499.5" y="324" fill="#000" text-anchor="middle">..</text>
<rect x="749" y="313" width="21" height="19" fill="#3aa8a8"/>
<rect x="749" y="313" width="21" height="1" fill="#8a8288"/>
<rect x="749" y="331" width="21" height="1" fill="#8a8288"/>
<rect x="749" y="313" width="1" height="19" fill="#8a8288"/>
<rect x="769" y="313" width="1" height="19" fill="#8a8288"/>
<text x="759.5" y="324" fill="#000" text-anchor="middle">..</text>
<rect x="1149" y="313" width="21" height="19" fill="#3aa8a8"/>
<rect x="1149" y="313" width="21" height="1" fill="#8a8288"/>
<rect x="1149" y="331" width="21" height="1" fill="#8a8288"/>
<rect x="1149" y="313" width="1" height="19" fill="#8a8288"/>
<rect x="1169" y="313" width="1" height="19" fill="#8a8288"/>
<text x="1159.5" y="324" fill="#000" text-anchor="middle">..</text>
<rect x="1389" y="313" width="21" height="19" fill="#3aa8a8"/>
<rect x="1389" y="313" width="21" height="1" fill="#8a8288"/>
<rect x="1389" y="331" width="21" height="1" fill="#8a8288"/>
<rect x="1389" y="313" width="1" height="19" fill="#8a8288"/>
<rect x="1409" y="313" width="1" height="19" fill="#8a8288"/>
<text x="1399.5" y="324" fill="#000" text-anchor="middle">..</text>
<rect x="1789" y="313" width="21" height="19" fill="#3aa8a8"/>
<rect x="1789" y="313" width="21" height="1" fill="#8a8288"/>
<rect x="1789" y="331" width="21" height="1" fill="#8a8288"/>
<rect x="1789" y="313" width="1" height="19" fill="#8a8288"/>
<rect x="1809" y="313" width="1" height="19" fill="#8a8288"/>
<text x="1799.5" y="324" fill="#000" text-anchor="middle">..</text>
<rect x="469" y="355" width="21" height="1" fill="#00dc00"/>
<rect x="489" y="338" width="21" height="17" fill="#003c00"/>
<rect x="489" y="355" width="21" height="1" fill="#4a4a4a"/>
<rect x="489" y="337" width="21" height="1" fill="#00dc00"/>
<rect x="509" y="355" width="241" height="1" fill="#00dc00"/>
<rect x="749" y="338" width="21" height="17" fill="#003c00"/>
<rect x="749" y="355" width="21" height="1" fill="#4a4a4a"/>
<rect x="749" y="337" width="21" height="1" fill="#00dc00"/>
<rect x="769" y="355" width="381" height="1" fill="#00dc00"/>
<rect x="1149" y="338" width="21" height="17" fill="#003c00"/>
<rect x="1149" y="355" width="21" height="1" fill="#4a4a4a"/>
<rect x="1149" y="337" width="21" height="1" fill="#00dc00"/>
<rect x="1169" y="355" width="221" height="1" fill="#00dc00"/>
<rect x="1389" y="338" width="21" height="17" fill="#003c00"/>
<rect x="1389" y="355" width="21" height="1" fill="#4a4a4a"/>
<rect x="1389" y="337" width="21" height="1" fill="#00dc00"/>
<rect x="1409" y="355" width="381" height="1" fill="#00dc00"/>
<rect x="1789" y="338" width="21" height="17" fill="#003c00"/>
<rect x="1789" y="355" width="21" height="1" fill="#4a4a4a"/>
<rect x="1789" y="337" width="21" height="1" fill="#00dc00"/>
<rect x="1809" y="355" width="341" height="1" fill="#00dc00"/>
<rect x="489" y="337" width="1" height="19" fill="#00dc00"/>
<rect x="509" y="337" width="1" height="19" fill="#00dc00"/>
<rect x="749" y="337" width="1" height="19" fill="#00dc00"/>
<rect x="769" y="337" width="1" height="19" fill="#00dc00"/>
<rect x="1149" y="337" width="1" height="19" fill="#00dc00"/>
<rect x="1169" y="337" width="1" height="19" fill="#00dc00"/>
<rect x="1389" y="337" width="1" height="19" fill="#00dc00"/>
<rect x="1409" y="337" width="1" height="19" fill="#00dc00"/>
<rect x="1789" y="337" width="1" height="19" fill="#00dc00"/>
<rect x="1809" y="337" width="1" height="19" fill="#00dc00"/>
<rect x="469" y="362" width="1681" height="17" fill="#003c00"/>
<rect x="469" y="379" width="1681" height="1" fill="#4a4a4a"/>
<rect x="469" y="361" width="1681" height="1" fill="#00dc00"/>
<rect x="470" y="361" width="1" height="19" fill="#00b400"/>
<rect x="469" y="385" width="1678" height="1" fill="#00dc00"/>
<rect x="469" y="403" width="1678" height="1" fill="#00dc00"/>
<text x="1308.0" y="396" fill="#d4d4d4" text-anchor="middle">0</text>
<rect x="469" y="409" width="277" height="1" fill="#00dc00"/>
<rect x="469" y="427" width="277" height="1" fill="#00dc00"/>
<text x="607.5" y="420" fill="#d4d4d4" text-anchor="middle">00000000</text>
<rect x="753" y="409" width="393" height="1" fill="#00dc00"/>
<rect x="753" y="427" width="393" height="1" fill="#00dc00"/>
<text x="949.5" y="420" fill="#d4d4d4" text-anchor="middle">00000ff8</text>
<rect x="1153" y="409" width="233" height="1" fill="#00dc00"/>
<rect x="1153" y="427" width="233" height="1" fill="#00dc00"/>
<text x="1269.5" y="420" fill="#d4d4d4" text-anchor="middle">00000008</text>
<rect x="1393" y="409" width="393" height="1" fill="#00dc00"/>
<rect x="1393" y="427" width="393" height="1" fill="#00dc00"/>
<text x="1589.5" y="420" fill="#d4d4d4" text-anchor="middle">00000010</text>
<rect x="1793" y="409" width="354" height="1" fill="#00dc00"/>
<rect x="1793" y="427" width="354" height="1" fill="#00dc00"/>
<text x="1970.0" y="420" fill="#d4d4d4" text-anchor="middle">00000018</text>
<path d="M745,409.5 L754,427.5 M745,427.5 L754,409.5" stroke="#00dc00" stroke-width="1.1" fill="none"/>
<path d="M1145,409.5 L1154,427.5 M1145,427.5 L1154,409.5" stroke="#00dc00" stroke-width="1.1" fill="none"/>
<path d="M1385,409.5 L1394,427.5 M1385,427.5 L1394,409.5" stroke="#00dc00" stroke-width="1.1" fill="none"/>
<path d="M1785,409.5 L1794,427.5 M1785,427.5 L1794,409.5" stroke="#00dc00" stroke-width="1.1" fill="none"/>
<rect x="469" y="433" width="1678" height="1" fill="#00dc00"/>
<rect x="469" y="451" width="1678" height="1" fill="#00dc00"/>
<text x="1308.0" y="444" fill="#d4d4d4" text-anchor="middle">00</text>
<rect x="469" y="457" width="17" height="1" fill="#00dc00"/>
<rect x="469" y="475" width="17" height="1" fill="#00dc00"/>
<text x="477.5" y="468" fill="#d4d4d4" text-anchor="middle">..</text>
<rect x="493" y="457" width="1654" height="1" fill="#00dc00"/>
<rect x="493" y="475" width="1654" height="1" fill="#00dc00"/>
<text x="1320.0" y="468" fill="#d4d4d4" text-anchor="middle">8 bytes</text>
<path d="M485,457.5 L494,475.5 M485,475.5 L494,457.5" stroke="#00dc00" stroke-width="1.1" fill="none"/>
<rect x="469" y="481" width="1678" height="1" fill="#00dc00"/>
<rect x="469" y="499" width="1678" height="1" fill="#00dc00"/>
<text x="1308.0" y="492" fill="#d4d4d4" text-anchor="middle">3</text>
<rect x="469" y="505" width="17" height="1" fill="#00dc00"/>
<rect x="469" y="523" width="17" height="1" fill="#00dc00"/>
<text x="477.5" y="516" fill="#d4d4d4" text-anchor="middle">..</text>
<rect x="493" y="505" width="1654" height="1" fill="#00dc00"/>
<rect x="493" y="523" width="1654" height="1" fill="#00dc00"/>
<text x="1320.0" y="516" fill="#d4d4d4" text-anchor="middle">Data Non-secure Unprivileged</text>
<path d="M485,505.5 L494,523.5 M485,523.5 L494,505.5" stroke="#00dc00" stroke-width="1.1" fill="none"/>
<rect x="469" y="545" width="1681" height="1" fill="#0a2c0a"/>
<rect x="469" y="547" width="1681" height="1" fill="#52b446"/>
<rect x="469" y="551" width="37" height="1" fill="#0a2c0a"/>
<rect x="469" y="569" width="37" height="1" fill="#0a2c0a"/>
<rect x="469" y="553" width="37" height="1" fill="#52b446"/>
<rect x="469" y="571" width="37" height="1" fill="#52b446"/>
<text x="487.5" y="564" fill="#d4d4d4" text-anchor="middle">0</text>
<rect x="513" y="551" width="253" height="1" fill="#0a2c0a"/>
<rect x="513" y="569" width="253" height="1" fill="#0a2c0a"/>
<rect x="513" y="553" width="253" height="1" fill="#52b446"/>
<rect x="513" y="571" width="253" height="1" fill="#52b446"/>
<text x="639.5" y="564" fill="#d4d4d4" text-anchor="middle">1</text>
<rect x="773" y="551" width="213" height="1" fill="#0a2c0a"/>
<rect x="773" y="569" width="213" height="1" fill="#0a2c0a"/>
<rect x="773" y="553" width="213" height="1" fill="#52b446"/>
<rect x="773" y="571" width="213" height="1" fill="#52b446"/>
<text x="879.5" y="564" fill="#d4d4d4" text-anchor="middle">2</text>
<rect x="993" y="551" width="173" height="1" fill="#0a2c0a"/>
<rect x="993" y="569" width="173" height="1" fill="#0a2c0a"/>
<rect x="993" y="553" width="173" height="1" fill="#52b446"/>
<rect x="993" y="571" width="173" height="1" fill="#52b446"/>
<text x="1079.5" y="564" fill="#d4d4d4" text-anchor="middle">1</text>
<rect x="1173" y="551" width="73" height="1" fill="#0a2c0a"/>
<rect x="1173" y="569" width="73" height="1" fill="#0a2c0a"/>
<rect x="1173" y="553" width="73" height="1" fill="#52b446"/>
<rect x="1173" y="571" width="73" height="1" fill="#52b446"/>
<text x="1209.5" y="564" fill="#d4d4d4" text-anchor="middle">2</text>
<rect x="1253" y="551" width="153" height="1" fill="#0a2c0a"/>
<rect x="1253" y="569" width="153" height="1" fill="#0a2c0a"/>
<rect x="1253" y="553" width="153" height="1" fill="#52b446"/>
<rect x="1253" y="571" width="153" height="1" fill="#52b446"/>
<text x="1329.5" y="564" fill="#d4d4d4" text-anchor="middle">1</text>
<rect x="1413" y="551" width="233" height="1" fill="#0a2c0a"/>
<rect x="1413" y="569" width="233" height="1" fill="#0a2c0a"/>
<rect x="1413" y="553" width="233" height="1" fill="#52b446"/>
<rect x="1413" y="571" width="233" height="1" fill="#52b446"/>
<text x="1529.5" y="564" fill="#d4d4d4" text-anchor="middle">2</text>
<rect x="1653" y="551" width="153" height="1" fill="#0a2c0a"/>
<rect x="1653" y="569" width="153" height="1" fill="#0a2c0a"/>
<rect x="1653" y="553" width="153" height="1" fill="#52b446"/>
<rect x="1653" y="571" width="153" height="1" fill="#52b446"/>
<text x="1729.5" y="564" fill="#d4d4d4" text-anchor="middle">1</text>
<rect x="1813" y="551" width="73" height="1" fill="#0a2c0a"/>
<rect x="1813" y="569" width="73" height="1" fill="#0a2c0a"/>
<rect x="1813" y="553" width="73" height="1" fill="#52b446"/>
<rect x="1813" y="571" width="73" height="1" fill="#52b446"/>
<text x="1849.5" y="564" fill="#d4d4d4" text-anchor="middle">2</text>
<rect x="1893" y="551" width="254" height="1" fill="#0a2c0a"/>
<rect x="1893" y="569" width="254" height="1" fill="#0a2c0a"/>
<rect x="1893" y="553" width="254" height="1" fill="#52b446"/>
<rect x="1893" y="571" width="254" height="1" fill="#52b446"/>
<text x="2020.0" y="564" fill="#d4d4d4" text-anchor="middle">1</text>
<path d="M505,553.5 L514,571.5 M505,571.5 L514,553.5" stroke="#52b446" stroke-width="1.1" fill="none"/>
<path d="M765,553.5 L774,571.5 M765,571.5 L774,553.5" stroke="#52b446" stroke-width="1.1" fill="none"/>
<path d="M985,553.5 L994,571.5 M985,571.5 L994,553.5" stroke="#52b446" stroke-width="1.1" fill="none"/>
<path d="M1165,553.5 L1174,571.5 M1165,571.5 L1174,553.5" stroke="#52b446" stroke-width="1.1" fill="none"/>
<path d="M1245,553.5 L1254,571.5 M1245,571.5 L1254,553.5" stroke="#52b446" stroke-width="1.1" fill="none"/>
<path d="M1405,553.5 L1414,571.5 M1405,571.5 L1414,553.5" stroke="#52b446" stroke-width="1.1" fill="none"/>
<path d="M1645,553.5 L1654,571.5 M1645,571.5 L1654,553.5" stroke="#52b446" stroke-width="1.1" fill="none"/>
<path d="M1805,553.5 L1814,571.5 M1805,571.5 L1814,553.5" stroke="#52b446" stroke-width="1.1" fill="none"/>
<path d="M1885,553.5 L1894,571.5 M1885,571.5 L1894,553.5" stroke="#52b446" stroke-width="1.1" fill="none"/>
<rect x="469" y="586" width="1681" height="1" fill="#167880"/>
<rect x="509" y="577" width="21" height="19" fill="#1a6e78"/>
<rect x="509" y="577" width="21" height="1" fill="#9a8084"/>
<rect x="509" y="595" width="21" height="1" fill="#9a8084"/>
<rect x="509" y="577" width="1" height="19" fill="#9a8084"/>
<rect x="529" y="577" width="1" height="19" fill="#9a8084"/>
<text x="519.5" y="588" fill="#ffffff" text-anchor="middle">..</text>
<rect x="769" y="577" width="21" height="19" fill="#1a6e78"/>
<rect x="769" y="577" width="21" height="1" fill="#9a8084"/>
<rect x="769" y="595" width="21" height="1" fill="#9a8084"/>
<rect x="769" y="577" width="1" height="19" fill="#9a8084"/>
<rect x="789" y="577" width="1" height="19" fill="#9a8084"/>
<text x="779.5" y="588" fill="#ffffff" text-anchor="middle">..</text>
<rect x="1169" y="577" width="21" height="19" fill="#1a6e78"/>
<rect x="1169" y="577" width="21" height="1" fill="#9a8084"/>
<rect x="1169" y="595" width="21" height="1" fill="#9a8084"/>
<rect x="1169" y="577" width="1" height="19" fill="#9a8084"/>
<rect x="1189" y="577" width="1" height="19" fill="#9a8084"/>
<text x="1179.5" y="588" fill="#ffffff" text-anchor="middle">..</text>
<rect x="1409" y="577" width="21" height="19" fill="#1a6e78"/>
<rect x="1409" y="577" width="21" height="1" fill="#9a8084"/>
<rect x="1409" y="595" width="21" height="1" fill="#9a8084"/>
<rect x="1409" y="577" width="1" height="19" fill="#9a8084"/>
<rect x="1429" y="577" width="1" height="19" fill="#9a8084"/>
<text x="1419.5" y="588" fill="#ffffff" text-anchor="middle">..</text>
<rect x="1809" y="577" width="21" height="19" fill="#1a6e78"/>
<rect x="1809" y="577" width="21" height="1" fill="#9a8084"/>
<rect x="1809" y="595" width="21" height="1" fill="#9a8084"/>
<rect x="1809" y="577" width="1" height="19" fill="#9a8084"/>
<rect x="1829" y="577" width="1" height="19" fill="#9a8084"/>
<text x="1819.5" y="588" fill="#ffffff" text-anchor="middle">..</text>
<rect x="469" y="617" width="41" height="1" fill="#0a2c0a"/>
<rect x="469" y="619" width="41" height="1" fill="#52b446"/>
<rect x="509" y="602" width="21" height="17" fill="#003c00"/>
<rect x="509" y="619" width="21" height="1" fill="#4a4a4a"/>
<rect x="509" y="601" width="21" height="1" fill="#00dc00"/>
<rect x="529" y="617" width="241" height="1" fill="#0a2c0a"/>
<rect x="529" y="619" width="241" height="1" fill="#52b446"/>
<rect x="769" y="602" width="21" height="17" fill="#003c00"/>
<rect x="769" y="619" width="21" height="1" fill="#4a4a4a"/>
<rect x="769" y="601" width="21" height="1" fill="#00dc00"/>
<rect x="789" y="617" width="381" height="1" fill="#0a2c0a"/>
<rect x="789" y="619" width="381" height="1" fill="#52b446"/>
<rect x="1169" y="602" width="21" height="17" fill="#003c00"/>
<rect x="1169" y="619" width="21" height="1" fill="#4a4a4a"/>
<rect x="1169" y="601" width="21" height="1" fill="#00dc00"/>
<rect x="1189" y="617" width="221" height="1" fill="#0a2c0a"/>
<rect x="1189" y="619" width="221" height="1" fill="#52b446"/>
<rect x="1409" y="602" width="21" height="17" fill="#003c00"/>
<rect x="1409" y="619" width="21" height="1" fill="#4a4a4a"/>
<rect x="1409" y="601" width="21" height="1" fill="#00dc00"/>
<rect x="1429" y="617" width="381" height="1" fill="#0a2c0a"/>
<rect x="1429" y="619" width="381" height="1" fill="#52b446"/>
<rect x="1809" y="602" width="21" height="17" fill="#003c00"/>
<rect x="1809" y="619" width="21" height="1" fill="#4a4a4a"/>
<rect x="1809" y="601" width="21" height="1" fill="#00dc00"/>
<rect x="1829" y="617" width="321" height="1" fill="#0a2c0a"/>
<rect x="1829" y="619" width="321" height="1" fill="#52b446"/>
<rect x="509" y="601" width="1" height="19" fill="#00dc00"/>
<rect x="529" y="601" width="1" height="19" fill="#00dc00"/>
<rect x="769" y="601" width="1" height="19" fill="#00dc00"/>
<rect x="789" y="601" width="1" height="19" fill="#00dc00"/>
<rect x="1169" y="601" width="1" height="19" fill="#00dc00"/>
<rect x="1189" y="601" width="1" height="19" fill="#00dc00"/>
<rect x="1409" y="601" width="1" height="19" fill="#00dc00"/>
<rect x="1429" y="601" width="1" height="19" fill="#00dc00"/>
<rect x="1809" y="601" width="1" height="19" fill="#00dc00"/>
<rect x="1829" y="601" width="1" height="19" fill="#00dc00"/>
<rect x="469" y="626" width="1681" height="17" fill="#003c00"/>
<rect x="469" y="643" width="1681" height="1" fill="#4a4a4a"/>
<rect x="469" y="625" width="1681" height="1" fill="#00dc00"/>
<rect x="470" y="625" width="1" height="19" fill="#00b400"/>
<rect x="469" y="665" width="41" height="1" fill="#0a2c0a"/>
<rect x="469" y="667" width="41" height="1" fill="#52b446"/>
<rect x="509" y="650" width="41" height="17" fill="#003c00"/>
<rect x="509" y="667" width="41" height="1" fill="#4a4a4a"/>
<rect x="509" y="649" width="41" height="1" fill="#00dc00"/>
<rect x="549" y="665" width="221" height="1" fill="#0a2c0a"/>
<rect x="549" y="667" width="221" height="1" fill="#52b446"/>
<rect x="769" y="650" width="41" height="17" fill="#003c00"/>
<rect x="769" y="667" width="41" height="1" fill="#4a4a4a"/>
<rect x="769" y="649" width="41" height="1" fill="#00dc00"/>
<rect x="809" y="665" width="361" height="1" fill="#0a2c0a"/>
<rect x="809" y="667" width="361" height="1" fill="#52b446"/>
<rect x="1169" y="650" width="41" height="17" fill="#003c00"/>
<rect x="1169" y="667" width="41" height="1" fill="#4a4a4a"/>
<rect x="1169" y="649" width="41" height="1" fill="#00dc00"/>
<rect x="1209" y="665" width="201" height="1" fill="#0a2c0a"/>
<rect x="1209" y="667" width="201" height="1" fill="#52b446"/>
<rect x="1409" y="650" width="41" height="17" fill="#003c00"/>
<rect x="1409" y="667" width="41" height="1" fill="#4a4a4a"/>
<rect x="1409" y="649" width="41" height="1" fill="#00dc00"/>
<rect x="1449" y="665" width="361" height="1" fill="#0a2c0a"/>
<rect x="1449" y="667" width="361" height="1" fill="#52b446"/>
<rect x="1809" y="650" width="41" height="17" fill="#003c00"/>
<rect x="1809" y="667" width="41" height="1" fill="#4a4a4a"/>
<rect x="1809" y="649" width="41" height="1" fill="#00dc00"/>
<rect x="1849" y="665" width="301" height="1" fill="#0a2c0a"/>
<rect x="1849" y="667" width="301" height="1" fill="#52b446"/>
<rect x="509" y="649" width="1" height="19" fill="#00dc00"/>
<rect x="549" y="649" width="1" height="19" fill="#00dc00"/>
<rect x="769" y="649" width="1" height="19" fill="#00dc00"/>
<rect x="809" y="649" width="1" height="19" fill="#00dc00"/>
<rect x="1169" y="649" width="1" height="19" fill="#00dc00"/>
<rect x="1209" y="649" width="1" height="19" fill="#00dc00"/>
<rect x="1409" y="649" width="1" height="19" fill="#00dc00"/>
<rect x="1449" y="649" width="1" height="19" fill="#00dc00"/>
<rect x="1809" y="649" width="1" height="19" fill="#00dc00"/>
<rect x="1849" y="649" width="1" height="19" fill="#00dc00"/>
<rect x="469" y="671" width="17" height="1" fill="#0a2c0a"/>
<rect x="469" y="689" width="17" height="1" fill="#0a2c0a"/>
<rect x="469" y="673" width="17" height="1" fill="#52b446"/>
<rect x="469" y="691" width="17" height="1" fill="#52b446"/>
<text x="477.5" y="684" fill="#d4d4d4" text-anchor="middle">..</text>
<rect x="493" y="671" width="33" height="1" fill="#0a2c0a"/>
<rect x="493" y="689" width="33" height="1" fill="#0a2c0a"/>
<rect x="493" y="673" width="33" height="1" fill="#52b446"/>
<rect x="493" y="691" width="33" height="1" fill="#52b446"/>
<text x="509.5" y="684" fill="#d4d4d4" text-anchor="middle">0...</text>
<rect x="533" y="671" width="213" height="1" fill="#0a2c0a"/>
<rect x="533" y="689" width="213" height="1" fill="#0a2c0a"/>
<rect x="533" y="673" width="213" height="1" fill="#52b446"/>
<rect x="533" y="691" width="213" height="1" fill="#52b446"/>
<text x="639.5" y="684" fill="#d4d4d4" text-anchor="middle">efeeedecebeae9e8</text>
<rect x="753" y="671" width="33" height="1" fill="#0a2c0a"/>
<rect x="753" y="689" width="33" height="1" fill="#0a2c0a"/>
<rect x="753" y="673" width="33" height="1" fill="#52b446"/>
<rect x="753" y="691" width="33" height="1" fill="#52b446"/>
<text x="769.5" y="684" fill="#d4d4d4" text-anchor="middle">f...</text>
<rect x="793" y="671" width="353" height="1" fill="#0a2c0a"/>
<rect x="793" y="689" width="353" height="1" fill="#0a2c0a"/>
<rect x="793" y="673" width="353" height="1" fill="#52b446"/>
<rect x="793" y="691" width="353" height="1" fill="#52b446"/>
<text x="969.5" y="684" fill="#d4d4d4" text-anchor="middle">f7f6f5f4f3f2f1f0</text>
<rect x="1153" y="671" width="33" height="1" fill="#0a2c0a"/>
<rect x="1153" y="689" width="33" height="1" fill="#0a2c0a"/>
<rect x="1153" y="673" width="33" height="1" fill="#52b446"/>
<rect x="1153" y="691" width="33" height="1" fill="#52b446"/>
<text x="1169.5" y="684" fill="#d4d4d4" text-anchor="middle">0...</text>
<rect x="1193" y="671" width="193" height="1" fill="#0a2c0a"/>
<rect x="1193" y="689" width="193" height="1" fill="#0a2c0a"/>
<rect x="1193" y="673" width="193" height="1" fill="#52b446"/>
<rect x="1193" y="691" width="193" height="1" fill="#52b446"/>
<text x="1289.5" y="684" fill="#d4d4d4" text-anchor="middle">fffefdfcfbfaf9f8</text>
<rect x="1393" y="671" width="33" height="1" fill="#0a2c0a"/>
<rect x="1393" y="689" width="33" height="1" fill="#0a2c0a"/>
<rect x="1393" y="673" width="33" height="1" fill="#52b446"/>
<rect x="1393" y="691" width="33" height="1" fill="#52b446"/>
<text x="1409.5" y="684" fill="#d4d4d4" text-anchor="middle">1...</text>
<rect x="1433" y="671" width="353" height="1" fill="#0a2c0a"/>
<rect x="1433" y="689" width="353" height="1" fill="#0a2c0a"/>
<rect x="1433" y="673" width="353" height="1" fill="#52b446"/>
<rect x="1433" y="691" width="353" height="1" fill="#52b446"/>
<text x="1609.5" y="684" fill="#d4d4d4" text-anchor="middle">1234567890abcdef</text>
<rect x="1793" y="671" width="33" height="1" fill="#0a2c0a"/>
<rect x="1793" y="689" width="33" height="1" fill="#0a2c0a"/>
<rect x="1793" y="673" width="33" height="1" fill="#52b446"/>
<rect x="1793" y="691" width="33" height="1" fill="#52b446"/>
<text x="1809.5" y="684" fill="#d4d4d4" text-anchor="middle">1...</text>
<rect x="1833" y="671" width="314" height="1" fill="#0a2c0a"/>
<rect x="1833" y="689" width="314" height="1" fill="#0a2c0a"/>
<rect x="1833" y="673" width="314" height="1" fill="#52b446"/>
<rect x="1833" y="691" width="314" height="1" fill="#52b446"/>
<text x="1990.0" y="684" fill="#d4d4d4" text-anchor="middle">1234567890abcdef</text>
<path d="M485,673.5 L494,691.5 M485,691.5 L494,673.5" stroke="#52b446" stroke-width="1.1" fill="none"/>
<path d="M525,673.5 L534,691.5 M525,691.5 L534,673.5" stroke="#52b446" stroke-width="1.1" fill="none"/>
<path d="M745,673.5 L754,691.5 M745,691.5 L754,673.5" stroke="#52b446" stroke-width="1.1" fill="none"/>
<path d="M785,673.5 L794,691.5 M785,691.5 L794,673.5" stroke="#52b446" stroke-width="1.1" fill="none"/>
<path d="M1145,673.5 L1154,691.5 M1145,691.5 L1154,673.5" stroke="#52b446" stroke-width="1.1" fill="none"/>
<path d="M1185,673.5 L1194,691.5 M1185,691.5 L1194,673.5" stroke="#52b446" stroke-width="1.1" fill="none"/>
<path d="M1385,673.5 L1394,691.5 M1385,691.5 L1394,673.5" stroke="#52b446" stroke-width="1.1" fill="none"/>
<path d="M1425,673.5 L1434,691.5 M1425,691.5 L1434,673.5" stroke="#52b446" stroke-width="1.1" fill="none"/>
<path d="M1785,673.5 L1794,691.5 M1785,691.5 L1794,673.5" stroke="#52b446" stroke-width="1.1" fill="none"/>
<path d="M1825,673.5 L1834,691.5 M1825,691.5 L1834,673.5" stroke="#52b446" stroke-width="1.1" fill="none"/>
<rect x="469" y="695" width="1678" height="1" fill="#0a2c0a"/>
<rect x="469" y="713" width="1678" height="1" fill="#0a2c0a"/>
<rect x="469" y="697" width="1678" height="1" fill="#52b446"/>
<rect x="469" y="715" width="1678" height="1" fill="#52b446"/>
<text x="1308.0" y="708" fill="#d4d4d4" text-anchor="middle">ff</text>
<rect x="469" y="730" width="1681" height="1" fill="#4a78b0"/>
<rect x="969" y="721" width="21" height="19" fill="#44729e"/>
<rect x="969" y="721" width="21" height="1" fill="#8a8a8a"/>
<rect x="969" y="739" width="21" height="1" fill="#8a8a8a"/>
<rect x="969" y="721" width="1" height="19" fill="#8a8a8a"/>
<rect x="989" y="721" width="1" height="19" fill="#8a8a8a"/>
<text x="979.5" y="732" fill="#000" text-anchor="middle">..</text>
<rect x="1229" y="721" width="21" height="19" fill="#44729e"/>
<rect x="1229" y="721" width="21" height="1" fill="#8a8a8a"/>
<rect x="1229" y="739" width="21" height="1" fill="#8a8a8a"/>
<rect x="1229" y="721" width="1" height="19" fill="#8a8a8a"/>
<rect x="1249" y="721" width="1" height="19" fill="#8a8a8a"/>
<text x="1239.5" y="732" fill="#000" text-anchor="middle">..</text>
<rect x="1629" y="721" width="21" height="19" fill="#44729e"/>
<rect x="1629" y="721" width="21" height="1" fill="#8a8a8a"/>
<rect x="1629" y="739" width="21" height="1" fill="#8a8a8a"/>
<rect x="1629" y="721" width="1" height="19" fill="#8a8a8a"/>
<rect x="1649" y="721" width="1" height="19" fill="#8a8a8a"/>
<text x="1639.5" y="732" fill="#000" text-anchor="middle">..</text>
<rect x="1869" y="721" width="21" height="19" fill="#44729e"/>
<rect x="1869" y="721" width="21" height="1" fill="#8a8a8a"/>
<rect x="1869" y="739" width="21" height="1" fill="#8a8a8a"/>
<rect x="1869" y="721" width="1" height="19" fill="#8a8a8a"/>
<rect x="1889" y="721" width="1" height="19" fill="#8a8a8a"/>
<text x="1879.5" y="732" fill="#000" text-anchor="middle">..</text>
<rect x="469" y="761" width="501" height="1" fill="#0a2c0a"/>
<rect x="469" y="763" width="501" height="1" fill="#52b446"/>
<rect x="969" y="746" width="21" height="17" fill="#003c00"/>
<rect x="969" y="763" width="21" height="1" fill="#4a4a4a"/>
<rect x="969" y="745" width="21" height="1" fill="#00dc00"/>
<rect x="989" y="761" width="241" height="1" fill="#0a2c0a"/>
<rect x="989" y="763" width="241" height="1" fill="#52b446"/>
<rect x="1229" y="746" width="21" height="17" fill="#003c00"/>
<rect x="1229" y="763" width="21" height="1" fill="#4a4a4a"/>
<rect x="1229" y="745" width="21" height="1" fill="#00dc00"/>
<rect x="1249" y="761" width="381" height="1" fill="#0a2c0a"/>
<rect x="1249" y="763" width="381" height="1" fill="#52b446"/>
<rect x="1629" y="746" width="21" height="17" fill="#003c00"/>
<rect x="1629" y="763" width="21" height="1" fill="#4a4a4a"/>
<rect x="1629" y="745" width="21" height="1" fill="#00dc00"/>
<rect x="1649" y="761" width="221" height="1" fill="#0a2c0a"/>
<rect x="1649" y="763" width="221" height="1" fill="#52b446"/>
<rect x="1869" y="746" width="21" height="17" fill="#003c00"/>
<rect x="1869" y="763" width="21" height="1" fill="#4a4a4a"/>
<rect x="1869" y="745" width="21" height="1" fill="#00dc00"/>
<rect x="1889" y="761" width="261" height="1" fill="#0a2c0a"/>
<rect x="1889" y="763" width="261" height="1" fill="#52b446"/>
<rect x="969" y="745" width="1" height="19" fill="#00dc00"/>
<rect x="989" y="745" width="1" height="19" fill="#00dc00"/>
<rect x="1229" y="745" width="1" height="19" fill="#00dc00"/>
<rect x="1249" y="745" width="1" height="19" fill="#00dc00"/>
<rect x="1629" y="745" width="1" height="19" fill="#00dc00"/>
<rect x="1649" y="745" width="1" height="19" fill="#00dc00"/>
<rect x="1869" y="745" width="1" height="19" fill="#00dc00"/>
<rect x="1889" y="745" width="1" height="19" fill="#00dc00"/>
<rect x="469" y="785" width="61" height="1" fill="#0a2c0a"/>
<rect x="469" y="787" width="61" height="1" fill="#52b446"/>
<rect x="529" y="770" width="461" height="17" fill="#003c00"/>
<rect x="529" y="787" width="461" height="1" fill="#4a4a4a"/>
<rect x="529" y="769" width="461" height="1" fill="#00dc00"/>
<rect x="989" y="785" width="21" height="1" fill="#0a2c0a"/>
<rect x="989" y="787" width="21" height="1" fill="#52b446"/>
<rect x="1009" y="770" width="241" height="17" fill="#003c00"/>
<rect x="1009" y="787" width="241" height="1" fill="#4a4a4a"/>
<rect x="1009" y="769" width="241" height="1" fill="#00dc00"/>
<rect x="1249" y="785" width="21" height="1" fill="#0a2c0a"/>
<rect x="1249" y="787" width="21" height="1" fill="#52b446"/>
<rect x="1269" y="770" width="381" height="17" fill="#003c00"/>
<rect x="1269" y="787" width="381" height="1" fill="#4a4a4a"/>
<rect x="1269" y="769" width="381" height="1" fill="#00dc00"/>
<rect x="1649" y="785" width="21" height="1" fill="#0a2c0a"/>
<rect x="1649" y="787" width="21" height="1" fill="#52b446"/>
<rect x="1669" y="770" width="221" height="17" fill="#003c00"/>
<rect x="1669" y="787" width="221" height="1" fill="#4a4a4a"/>
<rect x="1669" y="769" width="221" height="1" fill="#00dc00"/>
<rect x="1889" y="785" width="21" height="1" fill="#0a2c0a"/>
<rect x="1889" y="787" width="21" height="1" fill="#52b446"/>
<rect x="1909" y="770" width="241" height="17" fill="#003c00"/>
<rect x="1909" y="787" width="241" height="1" fill="#4a4a4a"/>
<rect x="1909" y="769" width="241" height="1" fill="#00dc00"/>
<rect x="529" y="769" width="1" height="19" fill="#00dc00"/>
<rect x="989" y="769" width="1" height="19" fill="#00dc00"/>
<rect x="1009" y="769" width="1" height="19" fill="#00dc00"/>
<rect x="1249" y="769" width="1" height="19" fill="#00dc00"/>
<rect x="1269" y="769" width="1" height="19" fill="#00dc00"/>
<rect x="1649" y="769" width="1" height="19" fill="#00dc00"/>
<rect x="1669" y="769" width="1" height="19" fill="#00dc00"/>
<rect x="1889" y="769" width="1" height="19" fill="#00dc00"/>
<rect x="1909" y="769" width="1" height="19" fill="#00dc00"/>
<rect x="469" y="791" width="1678" height="1" fill="#0a2c0a"/>
<rect x="469" y="809" width="1678" height="1" fill="#0a2c0a"/>
<rect x="469" y="793" width="1678" height="1" fill="#52b446"/>
<rect x="469" y="811" width="1678" height="1" fill="#52b446"/>
<text x="1308.0" y="804" fill="#d4d4d4" text-anchor="middle">0</text>
<rect x="469" y="815" width="1678" height="1" fill="#0a2c0a"/>
<rect x="469" y="833" width="1678" height="1" fill="#0a2c0a"/>
<rect x="469" y="817" width="1678" height="1" fill="#52b446"/>
<rect x="469" y="835" width="1678" height="1" fill="#52b446"/>
<text x="1308.0" y="828" fill="#d4d4d4" text-anchor="middle">OKAY</text>
<rect x="469" y="839" width="37" height="1" fill="#0a2c0a"/>
<rect x="469" y="857" width="37" height="1" fill="#0a2c0a"/>
<rect x="469" y="841" width="37" height="1" fill="#52b446"/>
<rect x="469" y="859" width="37" height="1" fill="#52b446"/>
<text x="487.5" y="852" fill="#d4d4d4" text-anchor="middle">0</text>
<rect x="513" y="839" width="253" height="1" fill="#0a2c0a"/>
<rect x="513" y="857" width="253" height="1" fill="#0a2c0a"/>
<rect x="513" y="841" width="253" height="1" fill="#52b446"/>
<rect x="513" y="859" width="253" height="1" fill="#52b446"/>
<text x="639.5" y="852" fill="#d4d4d4" text-anchor="middle">1</text>
<rect x="773" y="839" width="213" height="1" fill="#0a2c0a"/>
<rect x="773" y="857" width="213" height="1" fill="#0a2c0a"/>
<rect x="773" y="841" width="213" height="1" fill="#52b446"/>
<rect x="773" y="859" width="213" height="1" fill="#52b446"/>
<text x="879.5" y="852" fill="#d4d4d4" text-anchor="middle">2</text>
<rect x="993" y="839" width="173" height="1" fill="#0a2c0a"/>
<rect x="993" y="857" width="173" height="1" fill="#0a2c0a"/>
<rect x="993" y="841" width="173" height="1" fill="#52b446"/>
<rect x="993" y="859" width="173" height="1" fill="#52b446"/>
<text x="1079.5" y="852" fill="#d4d4d4" text-anchor="middle">1</text>
<rect x="1173" y="839" width="73" height="1" fill="#0a2c0a"/>
<rect x="1173" y="857" width="73" height="1" fill="#0a2c0a"/>
<rect x="1173" y="841" width="73" height="1" fill="#52b446"/>
<rect x="1173" y="859" width="73" height="1" fill="#52b446"/>
<text x="1209.5" y="852" fill="#d4d4d4" text-anchor="middle">2</text>
<rect x="1253" y="839" width="153" height="1" fill="#0a2c0a"/>
<rect x="1253" y="857" width="153" height="1" fill="#0a2c0a"/>
<rect x="1253" y="841" width="153" height="1" fill="#52b446"/>
<rect x="1253" y="859" width="153" height="1" fill="#52b446"/>
<text x="1329.5" y="852" fill="#d4d4d4" text-anchor="middle">1</text>
<rect x="1413" y="839" width="233" height="1" fill="#0a2c0a"/>
<rect x="1413" y="857" width="233" height="1" fill="#0a2c0a"/>
<rect x="1413" y="841" width="233" height="1" fill="#52b446"/>
<rect x="1413" y="859" width="233" height="1" fill="#52b446"/>
<text x="1529.5" y="852" fill="#d4d4d4" text-anchor="middle">2</text>
<rect x="1653" y="839" width="153" height="1" fill="#0a2c0a"/>
<rect x="1653" y="857" width="153" height="1" fill="#0a2c0a"/>
<rect x="1653" y="841" width="153" height="1" fill="#52b446"/>
<rect x="1653" y="859" width="153" height="1" fill="#52b446"/>
<text x="1729.5" y="852" fill="#d4d4d4" text-anchor="middle">1</text>
<rect x="1813" y="839" width="73" height="1" fill="#0a2c0a"/>
<rect x="1813" y="857" width="73" height="1" fill="#0a2c0a"/>
<rect x="1813" y="841" width="73" height="1" fill="#52b446"/>
<rect x="1813" y="859" width="73" height="1" fill="#52b446"/>
<text x="1849.5" y="852" fill="#d4d4d4" text-anchor="middle">2</text>
<rect x="1893" y="839" width="254" height="1" fill="#0a2c0a"/>
<rect x="1893" y="857" width="254" height="1" fill="#0a2c0a"/>
<rect x="1893" y="841" width="254" height="1" fill="#52b446"/>
<rect x="1893" y="859" width="254" height="1" fill="#52b446"/>
<text x="2020.0" y="852" fill="#d4d4d4" text-anchor="middle">1</text>
<path d="M505,841.5 L514,859.5 M505,859.5 L514,841.5" stroke="#52b446" stroke-width="1.1" fill="none"/>
<path d="M765,841.5 L774,859.5 M765,859.5 L774,841.5" stroke="#52b446" stroke-width="1.1" fill="none"/>
<path d="M985,841.5 L994,859.5 M985,859.5 L994,841.5" stroke="#52b446" stroke-width="1.1" fill="none"/>
<path d="M1165,841.5 L1174,859.5 M1165,859.5 L1174,841.5" stroke="#52b446" stroke-width="1.1" fill="none"/>
<path d="M1245,841.5 L1254,859.5 M1245,859.5 L1254,841.5" stroke="#52b446" stroke-width="1.1" fill="none"/>
<path d="M1405,841.5 L1414,859.5 M1405,859.5 L1414,841.5" stroke="#52b446" stroke-width="1.1" fill="none"/>
<path d="M1645,841.5 L1654,859.5 M1645,859.5 L1654,841.5" stroke="#52b446" stroke-width="1.1" fill="none"/>
<path d="M1805,841.5 L1814,859.5 M1805,859.5 L1814,841.5" stroke="#52b446" stroke-width="1.1" fill="none"/>
<path d="M1885,841.5 L1894,859.5 M1885,859.5 L1894,841.5" stroke="#52b446" stroke-width="1.1" fill="none"/>
</g>
<rect x="2130" y="166" width="14" height="770" fill="#333333" style="mix-blend-mode:color-dodge"/>
<g shape-rendering="crispEdges">
<rect x="489" y="166" width="1" height="770" fill="#9a9a9a"/>
<rect x="589" y="166" width="1" height="770" fill="#9a9a9a"/>
<rect x="689" y="166" width="1" height="770" fill="#9a9a9a"/>
<rect x="789" y="166" width="1" height="770" fill="#9a9a9a"/>
<rect x="889" y="166" width="1" height="770" fill="#9a9a9a"/>
<rect x="989" y="166" width="1" height="770" fill="#9a9a9a"/>
<rect x="1089" y="166" width="1" height="770" fill="#9a9a9a"/>
<rect x="1189" y="166" width="1" height="770" fill="#9a9a9a"/>
<rect x="1289" y="166" width="1" height="770" fill="#9a9a9a"/>
<rect x="1389" y="166" width="1" height="770" fill="#9a9a9a"/>
<rect x="1489" y="166" width="1" height="770" fill="#9a9a9a"/>
<rect x="1589" y="166" width="1" height="770" fill="#9a9a9a"/>
<rect x="1689" y="166" width="1" height="770" fill="#9a9a9a"/>
<rect x="1789" y="166" width="1" height="770" fill="#9a9a9a"/>
<rect x="1889" y="166" width="1" height="770" fill="#9a9a9a"/>
<rect x="1989" y="166" width="1" height="770" fill="#9a9a9a"/>
<rect x="2089" y="166" width="1" height="770" fill="#9a9a9a"/>
<rect x="469" y="936" width="1676" height="21" fill="#b8a800"/>
<rect x="468" y="936" width="1" height="21" fill="#e0d000"/>
<rect x="2130" y="936" width="15" height="21" fill="#e0d000"/>
<rect x="469" y="957" width="1676" height="1" fill="#7a7a7a"/>
<rect x="469" y="953" width="1" height="4" fill="#202020"/>
<rect x="489" y="936" width="1" height="22" fill="#9a9a9a"/>
<rect x="509" y="953" width="1" height="4" fill="#202020"/>
<rect x="529" y="953" width="1" height="4" fill="#202020"/>
<rect x="549" y="953" width="1" height="4" fill="#202020"/>
<rect x="569" y="953" width="1" height="4" fill="#202020"/>
<rect x="589" y="936" width="1" height="22" fill="#9a9a9a"/>
<rect x="609" y="953" width="1" height="4" fill="#202020"/>
<rect x="629" y="953" width="1" height="4" fill="#202020"/>
<rect x="649" y="953" width="1" height="4" fill="#202020"/>
<rect x="669" y="953" width="1" height="4" fill="#202020"/>
<rect x="689" y="936" width="1" height="22" fill="#9a9a9a"/>
<rect x="709" y="953" width="1" height="4" fill="#202020"/>
<rect x="729" y="953" width="1" height="4" fill="#202020"/>
<rect x="749" y="953" width="1" height="4" fill="#202020"/>
<rect x="769" y="953" width="1" height="4" fill="#202020"/>
<rect x="789" y="936" width="1" height="22" fill="#9a9a9a"/>
<rect x="809" y="953" width="1" height="4" fill="#202020"/>
<rect x="829" y="953" width="1" height="4" fill="#202020"/>
<rect x="849" y="953" width="1" height="4" fill="#202020"/>
<rect x="869" y="953" width="1" height="4" fill="#202020"/>
<rect x="889" y="936" width="1" height="22" fill="#9a9a9a"/>
<rect x="909" y="953" width="1" height="4" fill="#202020"/>
<rect x="929" y="953" width="1" height="4" fill="#202020"/>
<rect x="949" y="953" width="1" height="4" fill="#202020"/>
<rect x="969" y="953" width="1" height="4" fill="#202020"/>
<rect x="989" y="936" width="1" height="22" fill="#9a9a9a"/>
<rect x="1009" y="953" width="1" height="4" fill="#202020"/>
<rect x="1029" y="953" width="1" height="4" fill="#202020"/>
<rect x="1049" y="953" width="1" height="4" fill="#202020"/>
<rect x="1069" y="953" width="1" height="4" fill="#202020"/>
<rect x="1089" y="936" width="1" height="22" fill="#9a9a9a"/>
<rect x="1109" y="953" width="1" height="4" fill="#202020"/>
<rect x="1129" y="953" width="1" height="4" fill="#202020"/>
<rect x="1149" y="953" width="1" height="4" fill="#202020"/>
<rect x="1169" y="953" width="1" height="4" fill="#202020"/>
<rect x="1189" y="936" width="1" height="22" fill="#9a9a9a"/>
<rect x="1209" y="953" width="1" height="4" fill="#202020"/>
<rect x="1229" y="953" width="1" height="4" fill="#202020"/>
<rect x="1249" y="953" width="1" height="4" fill="#202020"/>
<rect x="1269" y="953" width="1" height="4" fill="#202020"/>
<rect x="1289" y="936" width="1" height="22" fill="#9a9a9a"/>
<rect x="1309" y="953" width="1" height="4" fill="#202020"/>
<rect x="1329" y="953" width="1" height="4" fill="#202020"/>
<rect x="1349" y="953" width="1" height="4" fill="#202020"/>
<rect x="1369" y="953" width="1" height="4" fill="#202020"/>
<rect x="1389" y="936" width="1" height="22" fill="#9a9a9a"/>
<rect x="1409" y="953" width="1" height="4" fill="#202020"/>
<rect x="1429" y="953" width="1" height="4" fill="#202020"/>
<rect x="1449" y="953" width="1" height="4" fill="#202020"/>
<rect x="1469" y="953" width="1" height="4" fill="#202020"/>
<rect x="1489" y="936" width="1" height="22" fill="#9a9a9a"/>
<rect x="1509" y="953" width="1" height="4" fill="#202020"/>
<rect x="1529" y="953" width="1" height="4" fill="#202020"/>
<rect x="1549" y="953" width="1" height="4" fill="#202020"/>
<rect x="1569" y="953" width="1" height="4" fill="#202020"/>
<rect x="1589" y="936" width="1" height="22" fill="#9a9a9a"/>
<rect x="1609" y="953" width="1" height="4" fill="#202020"/>
<rect x="1629" y="953" width="1" height="4" fill="#202020"/>
<rect x="1649" y="953" width="1" height="4" fill="#202020"/>
<rect x="1669" y="953" width="1" height="4" fill="#202020"/>
<rect x="1689" y="936" width="1" height="22" fill="#9a9a9a"/>
<rect x="1709" y="953" width="1" height="4" fill="#202020"/>
<rect x="1729" y="953" width="1" height="4" fill="#202020"/>
<rect x="1749" y="953" width="1" height="4" fill="#202020"/>
<rect x="1769" y="953" width="1" height="4" fill="#202020"/>
<rect x="1789" y="936" width="1" height="22" fill="#9a9a9a"/>
<rect x="1809" y="953" width="1" height="4" fill="#202020"/>
<rect x="1829" y="953" width="1" height="4" fill="#202020"/>
<rect x="1849" y="953" width="1" height="4" fill="#202020"/>
<rect x="1869" y="953" width="1" height="4" fill="#202020"/>
<rect x="1889" y="936" width="1" height="22" fill="#9a9a9a"/>
<rect x="1909" y="953" width="1" height="4" fill="#202020"/>
<rect x="1929" y="953" width="1" height="4" fill="#202020"/>
<rect x="1949" y="953" width="1" height="4" fill="#202020"/>
<rect x="1969" y="953" width="1" height="4" fill="#202020"/>
<rect x="1989" y="936" width="1" height="22" fill="#9a9a9a"/>
<rect x="2009" y="953" width="1" height="4" fill="#202020"/>
<rect x="2029" y="953" width="1" height="4" fill="#202020"/>
<rect x="2049" y="953" width="1" height="4" fill="#202020"/>
<rect x="2069" y="953" width="1" height="4" fill="#202020"/>
<rect x="2089" y="936" width="1" height="22" fill="#9a9a9a"/>
<rect x="2109" y="953" width="1" height="4" fill="#202020"/>
<rect x="2129" y="953" width="1" height="4" fill="#202020"/>
<rect x="508" y="129" width="2" height="829" fill="#e00000"/>
<rect x="1148" y="129" width="2" height="829" fill="#1a6ee0"/>
<rect x="1388" y="129" width="2" height="829" fill="#d8d8d8"/>
<rect x="1868" y="109" width="2" height="849" fill="#e4d800"/>
</g>
<text x="492" y="948" fill="#000">-45</text>
<text x="592" y="948" fill="#000">-40</text>
<text x="692" y="948" fill="#000">-35</text>
<text x="792" y="948" fill="#000">-30</text>
<text x="892" y="948" fill="#000">-25</text>
<text x="992" y="948" fill="#000">-20</text>
<text x="1092" y="948" fill="#000">-15</text>
<text x="1192" y="948" fill="#000">-10</text>
<text x="1292" y="948" fill="#000">-5</text>
<text x="1392" y="948" fill="#000">0</text>
<text x="1492" y="948" fill="#000">5</text>
<text x="1592" y="948" fill="#000">10</text>
<text x="1692" y="948" fill="#000">15</text>
<text x="1792" y="948" fill="#000">20</text>
<text x="1892" y="948" fill="#000">25</text>
<text x="1992" y="948" fill="#000">30</text>
<text x="2092" y="948" fill="#000">35</text>
<g shape-rendering="crispEdges">
<rect x="503" y="129" width="12" height="16" fill="#d80000"/>
<rect x="503" y="919" width="12" height="17" fill="#d80000"/>
<rect x="1148" y="129" width="40" height="16" fill="#1066d6"/>
<rect x="1148" y="129" width="40" height="1" fill="#e8e8e8"/>
<rect x="1148" y="144" width="40" height="1" fill="#e8e8e8"/>
<rect x="1148" y="129" width="1" height="16" fill="#e8e8e8"/>
<rect x="1187" y="129" width="1" height="16" fill="#e8e8e8"/>
<rect x="1388" y="129" width="40" height="16" fill="#c8c8c8"/>
<rect x="1388" y="129" width="40" height="1" fill="#e0e0e0"/>
<rect x="1388" y="144" width="40" height="1" fill="#e0e0e0"/>
<rect x="1388" y="129" width="1" height="16" fill="#e0e0e0"/>
<rect x="1427" y="129" width="1" height="16" fill="#e0e0e0"/>
<rect x="1868" y="109" width="40" height="16" fill="#d4d000"/>
<rect x="1868" y="109" width="40" height="1" fill="#b0b0b0"/>
<rect x="1868" y="124" width="40" height="1" fill="#b0b0b0"/>
<rect x="1868" y="109" width="1" height="16" fill="#b0b0b0"/>
<rect x="1907" y="109" width="1" height="16" fill="#b0b0b0"/>
<rect x="1148" y="920" width="26" height="16" fill="#1066d6"/>
<rect x="1148" y="920" width="26" height="1" fill="#e8e8e8"/>
<rect x="1148" y="935" width="26" height="1" fill="#e8e8e8"/>
<rect x="1148" y="920" width="1" height="16" fill="#e8e8e8"/>
<rect x="1173" y="920" width="1" height="16" fill="#e8e8e8"/>
<rect x="1868" y="920" width="19" height="16" fill="#d4d000"/>
<rect x="1868" y="920" width="19" height="1" fill="#c0c0c0"/>
<rect x="1868" y="935" width="19" height="1" fill="#c0c0c0"/>
<rect x="1868" y="920" width="1" height="16" fill="#c0c0c0"/>
<rect x="1886" y="920" width="1" height="16" fill="#c0c0c0"/>
</g>
<text x="509" y="140" fill="#000" text-anchor="middle">T</text>
<text x="509" y="931" fill="#000" text-anchor="middle">T</text>
<text x="1150" y="140" fill="#000" text-anchor="start">1,056</text>
<text x="1390" y="140" fill="#000" text-anchor="start">1,068</text>
<text x="1870" y="120" fill="#000" text-anchor="start">1,092</text>
<text x="1150" y="931" fill="#000" text-anchor="start">-12</text>
<text x="1870" y="931" fill="#000" text-anchor="start">24</text>
<text x="471" y="992" fill="#f0f0f0">Updated at: 2025-Jul-26 19:41:16</text>
</svg>
</body></html>
